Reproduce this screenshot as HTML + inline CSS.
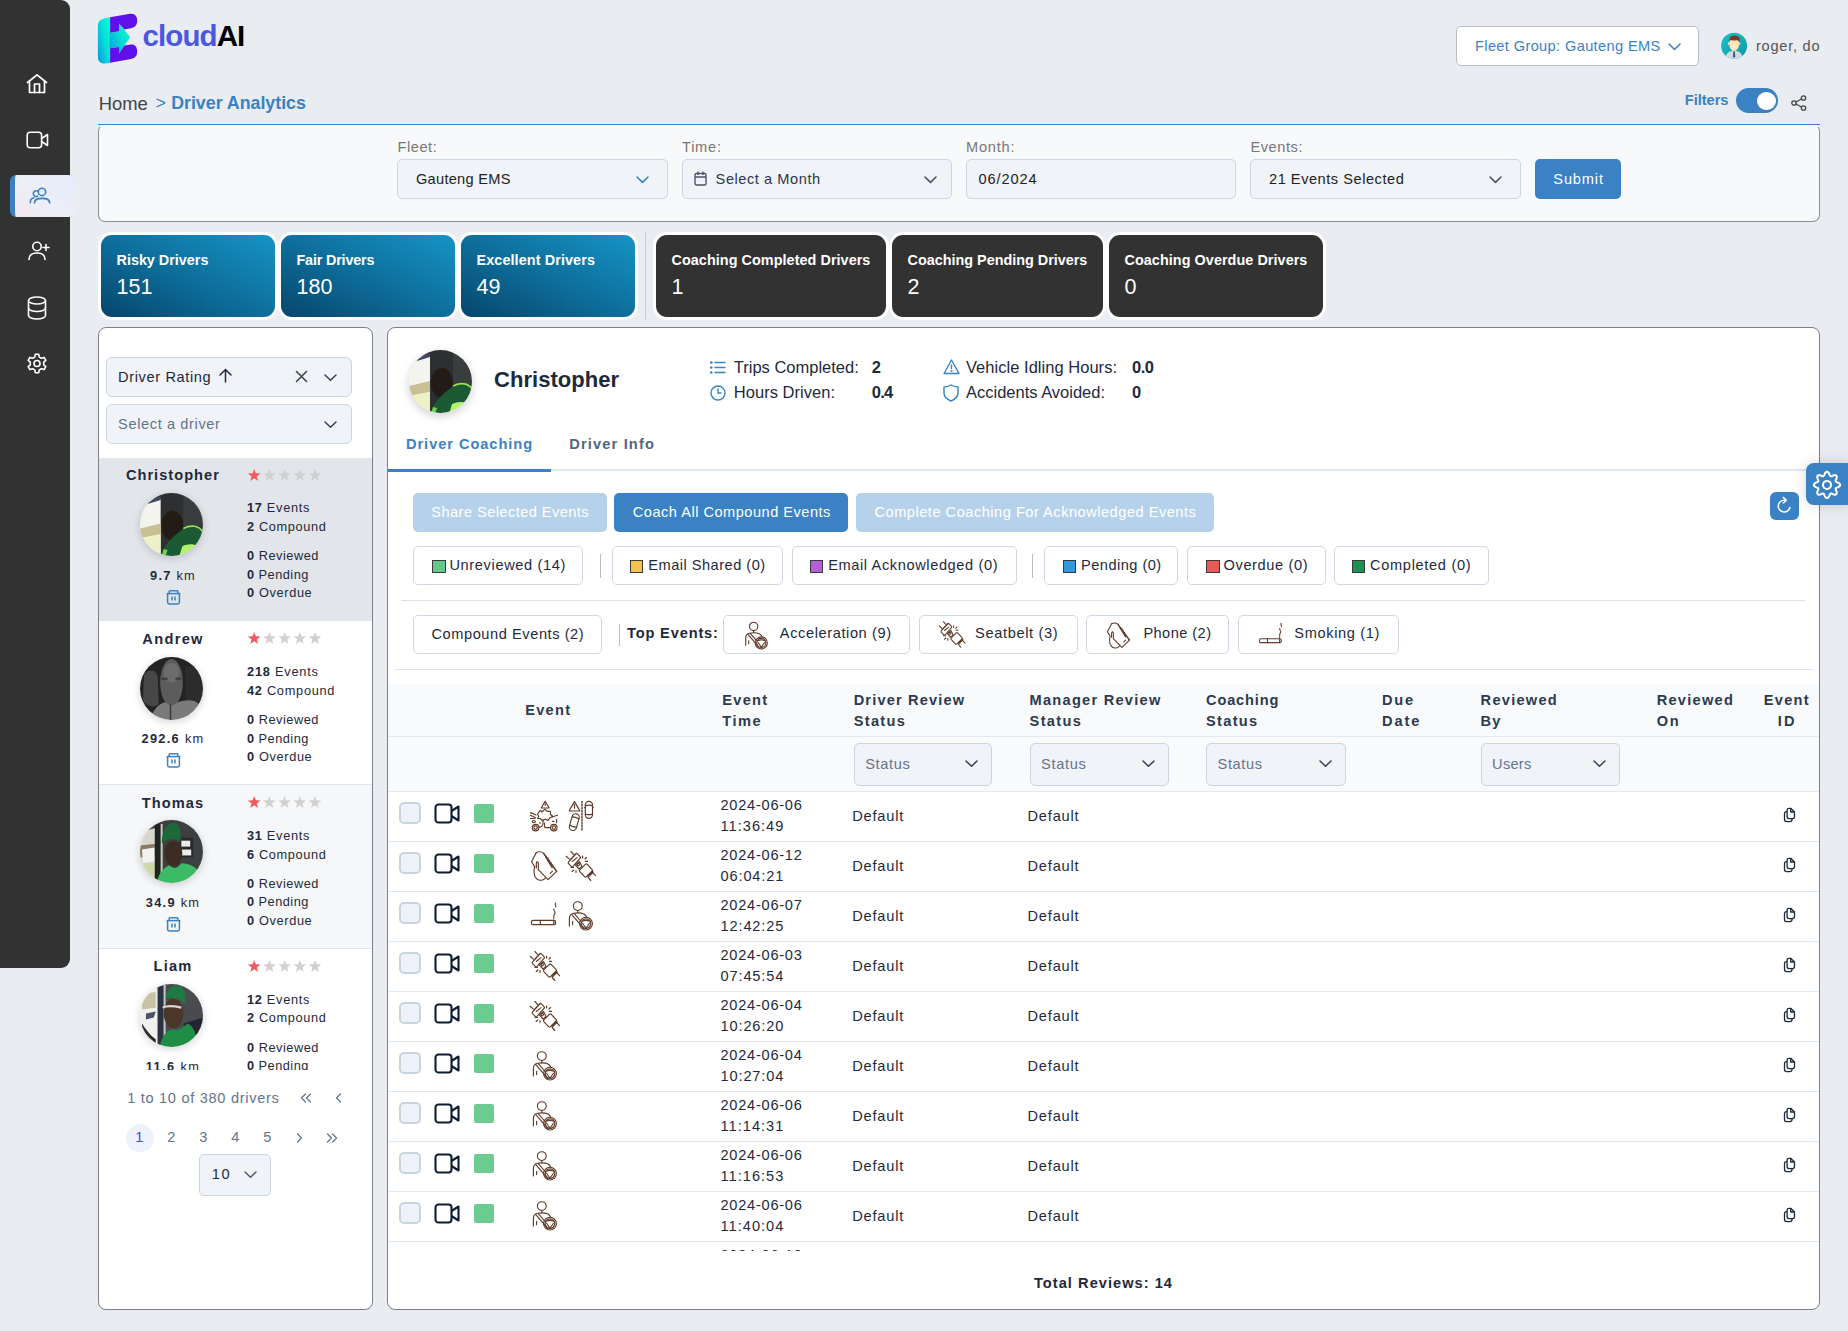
<!DOCTYPE html>
<html><head><meta charset="utf-8"><title>Driver Analytics</title>
<style>
html,body{margin:0;padding:0}
body{width:1848px;height:1331px;overflow:hidden;background:#e9ecf1;position:relative;font-family:"Liberation Sans",sans-serif}
.t{position:absolute;white-space:nowrap;line-height:normal}
.b{position:absolute;box-sizing:border-box}
svg{position:absolute;overflow:visible}
</style></head><body>
<div class="b" style="left:0px;top:0px;width:70px;height:968px;background:#323233;border-radius:0 9px 9px 0;"></div>
<div class="b" style="left:10px;top:175px;width:65px;height:42px;background:linear-gradient(45deg,#f3e9ee 0%,#eceef8 50%,#e4ecfb 100%);border-left:5px solid #3a82c4;border-radius:6px 0 0 6px;"></div>
<svg style="left:26px;top:73px" width="24" height="22" viewBox="0 0 24 22" fill="none" stroke="#ffffff" stroke-width="1.7" stroke-linecap="round" stroke-linejoin="round"><path d="M1.5 9.5 L11 1.8 L20.5 9.5"/><path d="M3.5 8.5 V19.5 H18.5 V8.5"/><path d="M8.5 19.5 V11 H13.5 V19.5"/></svg>
<svg style="left:26px;top:131px" width="24" height="18" viewBox="0 0 24 18" fill="none" stroke="#ffffff" stroke-width="1.6" stroke-linecap="round" stroke-linejoin="round"><rect x="1.2" y="1.2" width="14.4" height="15.6" rx="3"/><path d="M15.6 7.5 L21.5 3.5 V14.5 L15.6 10.5"/></svg>
<svg style="left:0;top:0" width="70" height="260" fill="none" stroke="#3a82c4" stroke-width="1.6" stroke-linecap="round"><circle cx="42" cy="191.9" r="3.7"/><path d="M34.4 203 C34.4 200.2 37.5 198.4 42 198.4 C46.5 198.4 49.7 200.2 49.7 203"/><path d="M37.4 191 A2.9 2.9 0 1 0 37.6 196.2"/><path d="M30.3 202.6 C30.3 200 31.6 198.3 33.9 197.8"/></svg>
<svg style="left:27px;top:240px" width="24" height="22" viewBox="0 0 24 22" fill="none" stroke="#ffffff" stroke-width="1.6" stroke-linecap="round" stroke-linejoin="round"><circle cx="10" cy="6.5" r="4.2"/><path d="M2 19.5 C2 15 5.5 13 10 13 C14.5 13 18 15 18 19.5"/><path d="M19 4.5 V10.5 M16 7.5 H22"/></svg>
<svg style="left:27px;top:296px" width="22" height="24" viewBox="0 0 22 24" fill="none" stroke="#ffffff" stroke-width="1.6" stroke-linecap="round" stroke-linejoin="round"><ellipse cx="10" cy="4.5" rx="8.5" ry="3.5"/><path d="M1.5 4.5 V19.5 C1.5 21.5 5.5 23 10 23 C14.5 23 18.5 21.5 18.5 19.5 V4.5"/><path d="M1.5 12 C1.5 14 5.5 15.5 10 15.5 C14.5 15.5 18.5 14 18.5 12"/></svg>
<svg style="left:25px;top:352px" width="24" height="24" viewBox="0 0 24 24" fill="none" stroke="#ffffff" stroke-width="1.6" stroke-linecap="round" stroke-linejoin="round"><path d="M10.3 2.3 L13.7 2.3 L14.3 5.1 L16.4 6.3 L19.1 5.4 L20.8 8.3 L18.7 10.2 L18.7 12.8 L20.8 14.7 L19.1 17.6 L16.4 16.7 L14.3 17.9 L13.7 20.7 L10.3 20.7 L9.7 17.9 L7.6 16.7 L4.9 17.6 L3.2 14.7 L5.3 12.8 L5.3 10.2 L3.2 8.3 L4.9 5.4 L7.6 6.3 L9.7 5.1 Z"/><circle cx="12" cy="11.5" r="3"/></svg>
<svg style="left:94px;top:10px" width="50" height="58" viewBox="0 0 50 58">
<defs><linearGradient id="lg1" x1="0" y1="1" x2="1" y2="0.2"><stop offset="0" stop-color="#0698dc"/><stop offset="0.6" stop-color="#08e0d8"/><stop offset="1" stop-color="#00ffd2"/></linearGradient></defs>
<path d="M16.1 7.3 L11 8.2 C6.5 9 3.9 11.5 3.9 16 L3.9 47 C3.9 51.5 7 54 11 53.5 L16.1 52.8 Z" fill="url(#lg1)"/>
<path d="M15.6 22.7 L25 21.3 L25 13.5 L36.2 27.2 L25 43.6 L25 37 L15.6 38.3 Z" fill="url(#lg1)"/>
<path d="M16.1 7.3 L36 3.8 C40.5 3 43.2 6 43.2 10.5 C43.2 15 41 17.5 37 18.2 L30.3 19.4 L25 13.5 L25 21.3 L16.1 22.7 Z" fill="#6010ea"/>
<path d="M16.1 38.3 L25 37 L25 43.6 L30.5 35.5 L37 34.5 C41 34 43.2 37 43.2 41.5 C43.2 46 41 48.2 37 48.9 L16.1 52.8 Z" fill="#6010ea"/>
</svg>
<div class="t " style="left:142.60px;top:19.40px;font-size:29.5px;font-weight:700;color:#000;letter-spacing:-0.927px;"><span style="color:#4a57e3">cloud</span><span style="color:#000">AI</span></div>
<div class="b" style="left:1456px;top:26px;width:243px;height:40px;background:#fff;border:1px solid #b9bcc2;border-radius:5px;"></div>
<div class="t " style="left:1475.00px;top:38.39px;font-size:14.6px;font-weight:400;color:#3a82c4;letter-spacing:0.366px;">Fleet Group: Gauteng EMS</div>
<svg style="left:1667.5px;top:43px" width="14" height="8" viewBox="0 0 14 8" fill="none" stroke="#3a82c4" stroke-width="1.6" stroke-linecap="round" stroke-linejoin="round"><path d="M1 1 L6.5 6.5 L12 1"/></svg>
<svg style="left:1716px;top:28px" width="36" height="36" viewBox="0 0 36 36">
<defs><linearGradient id="avg" x1="0" y1="0" x2="1" y2="1"><stop offset="0" stop-color="#1bc0cc"/><stop offset="1" stop-color="#0e9aa4"/></linearGradient><clipPath id="avc"><circle cx="18.1" cy="17.8" r="13"/></clipPath></defs>
<circle cx="18.1" cy="17.8" r="13" fill="url(#avg)"/>
<g clip-path="url(#avc)">
<path d="M9.5 31 C10 25 13 23 18 22.6 C23 23 26 25 27 31 Z" fill="#d3dae2"/>
<path d="M16.6 22.4 L19.6 22.4 L18.1 24 Z" fill="#ffffff"/>
<path d="M17.4 23.2 L18.8 23.2 L19.2 28.5 L18.1 30 L17 28.5 Z" fill="#2b5b82"/>
</g>
<rect x="16.4" y="19" width="3.4" height="4" fill="#f8d8a0"/>
<ellipse cx="12.9" cy="15.6" rx="1" ry="1.3" fill="#fde0b0"/><ellipse cx="23.4" cy="15.6" rx="1" ry="1.3" fill="#fde0b0"/>
<path d="M13.4 12.5 C13.4 9.8 15.5 8.8 18.1 8.8 C20.8 8.8 22.9 9.8 22.9 12.5 L22.9 17 C22.9 20.5 20.6 22.6 18.1 22.6 C15.6 22.6 13.4 20.5 13.4 17 Z" fill="#fee6b8"/>
<path d="M13 14.6 C12.6 10 14.5 7.4 18 7.4 C21.5 7.4 23.6 9 23.8 10.8 C23.8 12 23.4 13.6 23.2 14.6 C22.8 12.6 22 12 20.5 12.2 C18 12.6 15.5 12.2 13.8 12.2 C13.4 12.8 13.2 13.8 13 14.6 Z" fill="#6e3f25"/>
<ellipse cx="18" cy="18.8" rx="1.3" ry="0.7" fill="#ffffff"/>
</svg>
<div class="t " style="left:1756.00px;top:38.39px;font-size:14.6px;font-weight:400;color:#555555;letter-spacing:0.749px;">roger, do</div>
<div class="t " style="left:98.80px;top:93.05px;font-size:18.4px;font-weight:400;color:#444444;letter-spacing:-0.027px;">Home</div>
<div class="t " style="left:155.50px;top:92.69px;font-size:17.8px;font-weight:400;color:#3a82c4;letter-spacing:0.000px;">&gt;</div>
<div class="t " style="left:171.20px;top:92.69px;font-size:17.8px;font-weight:700;color:#3a82c4;letter-spacing:-0.006px;">Driver Analytics</div>
<div class="t " style="left:1684.80px;top:92.20px;font-size:14.7px;font-weight:700;color:#3a82c4;letter-spacing:-0.069px;">Filters</div>
<div class="b" style="left:1736px;top:88px;width:42px;height:25px;background:#3a82c4;border-radius:13px;"></div>
<div class="b" style="left:1757px;top:91.5px;width:18.5px;height:18.5px;background:#fff;border-radius:50%;"></div>
<svg style="left:1791px;top:95px" width="16" height="16" viewBox="0 0 16 16" fill="none" stroke="#444" stroke-width="1.3" stroke-linecap="round" stroke-linejoin="round"><circle cx="12.5" cy="3" r="2.2"/><circle cx="3" cy="8" r="2.2"/><circle cx="12.5" cy="13" r="2.2"/><path d="M5 7 L10.5 4 M5 9 L10.5 12"/></svg>
<div class="b" style="left:98px;top:124.5px;width:1722px;height:97.5px;background:#f8f9fb;border:1px solid #8a8d93;border-top-color:#ffffff;border-radius:6px 6px 7px 7px;"></div>
<div class="b" style="left:98px;top:123.6px;width:1722px;height:1.5px;background:#3a82c4;"></div>
<div class="t " style="left:397.40px;top:139.29px;font-size:14.6px;font-weight:400;color:#777777;letter-spacing:0.572px;">Fleet:</div>
<div class="b" style="left:397px;top:159px;width:271px;height:40px;background:#f0f3f8;border:1px solid #cdd5e0;border-radius:5px;"></div>
<div class="t " style="left:416.00px;top:170.99px;font-size:14.6px;font-weight:400;color:#222;letter-spacing:0.272px;">Gauteng EMS</div>
<svg style="left:636px;top:176px" width="13" height="7" viewBox="0 0 13 7" fill="none" stroke="#3a82c4" stroke-width="1.6" stroke-linecap="round" stroke-linejoin="round"><path d="M1 1 L6.5 6.3 L12 1"/></svg>
<div class="t " style="left:682.00px;top:139.29px;font-size:14.6px;font-weight:400;color:#777777;letter-spacing:0.755px;">Time:</div>
<div class="b" style="left:682px;top:159px;width:270px;height:40px;background:#f0f3f8;border:1px solid #cdd5e0;border-radius:5px;"></div>
<div class="t " style="left:715.60px;top:170.99px;font-size:14.6px;font-weight:400;color:#2d3748;letter-spacing:0.551px;">Select a Month</div>
<svg style="left:923.5px;top:176px" width="13" height="7" viewBox="0 0 13 7" fill="none" stroke="#4a5568" stroke-width="1.6" stroke-linecap="round" stroke-linejoin="round"><path d="M1 1 L6.5 6.3 L12 1"/></svg>
<svg style="left:694px;top:171px" width="13" height="15" viewBox="0 0 13 15" fill="none" stroke="#4a5568" stroke-width="1.4"><rect x="1" y="2.5" width="11" height="11.5" rx="1.5"/><path d="M1 6 H12 M4 0.5 V4 M9 0.5 V4"/></svg>
<div class="t " style="left:966.00px;top:139.29px;font-size:14.6px;font-weight:400;color:#777777;letter-spacing:0.792px;">Month:</div>
<div class="b" style="left:966px;top:159px;width:270px;height:40px;background:#f0f3f8;border:1px solid #cdd5e0;border-radius:5px;"></div>
<div class="t " style="left:978.50px;top:171.19px;font-size:14.6px;font-weight:400;color:#222;letter-spacing:0.897px;">06/2024</div>
<div class="t " style="left:1250.40px;top:139.29px;font-size:14.6px;font-weight:400;color:#777777;letter-spacing:0.571px;">Events:</div>
<div class="b" style="left:1250px;top:159px;width:271px;height:40px;background:#f0f3f8;border:1px solid #cdd5e0;border-radius:5px;"></div>
<div class="t " style="left:1269.00px;top:170.99px;font-size:14.6px;font-weight:400;color:#222;letter-spacing:0.529px;">21 Events Selected</div>
<svg style="left:1489px;top:176px" width="13" height="7" viewBox="0 0 13 7" fill="none" stroke="#4a5568" stroke-width="1.6" stroke-linecap="round" stroke-linejoin="round"><path d="M1 1 L6.5 6.3 L12 1"/></svg>
<div class="b" style="left:1535px;top:159px;width:86px;height:40px;background:#3a82c4;border-radius:5px;"></div>
<div class="t " style="left:1553.30px;top:171.19px;font-size:14.6px;font-weight:400;color:#fff;letter-spacing:0.845px;">Submit</div>
<div class="b" style="left:98px;top:232px;width:180px;height:88px;background:linear-gradient(205deg,#1594c6 0%,#0e6f9c 50%,#06466c 100%);border:3px solid #fff;border-radius:14px;"></div>
<div class="t " style="left:116.50px;top:251.97px;font-size:14.4px;font-weight:700;color:#fff;letter-spacing:-0.006px;">Risky Drivers</div>
<div class="t " style="left:116.50px;top:275.24px;font-size:21.5px;font-weight:400;color:#fff;letter-spacing:0.000px;">151</div>
<div class="b" style="left:278px;top:232px;width:180px;height:88px;background:linear-gradient(205deg,#1594c6 0%,#0e6f9c 50%,#06466c 100%);border:3px solid #fff;border-radius:14px;"></div>
<div class="t " style="left:296.50px;top:251.97px;font-size:14.4px;font-weight:700;color:#fff;letter-spacing:-0.187px;">Fair Drivers</div>
<div class="t " style="left:296.50px;top:275.24px;font-size:21.5px;font-weight:400;color:#fff;letter-spacing:0.000px;">180</div>
<div class="b" style="left:458px;top:232px;width:180px;height:88px;background:linear-gradient(205deg,#1594c6 0%,#0e6f9c 50%,#06466c 100%);border:3px solid #fff;border-radius:14px;"></div>
<div class="t " style="left:476.50px;top:251.97px;font-size:14.4px;font-weight:700;color:#fff;letter-spacing:0.101px;">Excellent Drivers</div>
<div class="t " style="left:476.50px;top:275.24px;font-size:21.5px;font-weight:400;color:#fff;letter-spacing:0.000px;">49</div>
<div class="b" style="left:645px;top:232px;width:1px;height:88px;background:#c9ccd2;"></div>
<div class="b" style="left:653px;top:232px;width:236px;height:88px;background:#323233;border:3px solid #fff;border-radius:14px;"></div>
<div class="t " style="left:671.50px;top:251.97px;font-size:14.4px;font-weight:700;color:#fff;letter-spacing:0.054px;">Coaching Completed Drivers</div>
<div class="t " style="left:671.50px;top:275.24px;font-size:21.5px;font-weight:400;color:#fff;letter-spacing:0.000px;">1</div>
<div class="b" style="left:889px;top:232px;width:217px;height:88px;background:#323233;border:3px solid #fff;border-radius:14px;"></div>
<div class="t " style="left:907.50px;top:251.97px;font-size:14.4px;font-weight:700;color:#fff;letter-spacing:-0.002px;">Coaching Pending Drivers</div>
<div class="t " style="left:907.50px;top:275.24px;font-size:21.5px;font-weight:400;color:#fff;letter-spacing:0.000px;">2</div>
<div class="b" style="left:1106px;top:232px;width:220px;height:88px;background:#323233;border:3px solid #fff;border-radius:14px;"></div>
<div class="t " style="left:1124.50px;top:251.97px;font-size:14.4px;font-weight:700;color:#fff;letter-spacing:0.057px;">Coaching Overdue Drivers</div>
<div class="t " style="left:1124.50px;top:275.24px;font-size:21.5px;font-weight:400;color:#fff;letter-spacing:0.000px;">0</div>
<div class="b" style="left:98px;top:327px;width:275px;height:983px;background:#fff;border:1px solid #7d7f86;border-radius:8px;"></div>
<div class="b" style="left:106px;top:357px;width:246px;height:40px;background:#f0f3f8;border:1px solid #cbd5e1;border-radius:6px;"></div>
<div class="t " style="left:118.10px;top:368.79px;font-size:14.6px;font-weight:400;color:#1e293b;letter-spacing:0.623px;">Driver Rating</div>
<svg style="left:323.5px;top:374px" width="13" height="7" viewBox="0 0 13 7" fill="none" stroke="#334155" stroke-width="1.5" stroke-linecap="round" stroke-linejoin="round"><path d="M1 1 L6.5 6.3 L12 1"/></svg>
<svg style="left:219px;top:368px" width="13" height="15" viewBox="0 0 13 15" fill="none" stroke="#1e293b" stroke-width="1.5" stroke-linecap="round"><path d="M6.5 14 V1.5 M1 7 L6.5 1.5 L12 7"/></svg><svg style="left:295px;top:370px" width="13" height="13" viewBox="0 0 13 13" fill="none" stroke="#334155" stroke-width="1.5" stroke-linecap="round"><path d="M1.5 1.5 L11.5 11.5 M11.5 1.5 L1.5 11.5"/></svg>
<div class="b" style="left:106px;top:404px;width:246px;height:40px;background:#f0f3f8;border:1px solid #cbd5e1;border-radius:6px;"></div>
<div class="t " style="left:118.10px;top:415.79px;font-size:14.6px;font-weight:400;color:#64748b;letter-spacing:0.610px;">Select a driver</div>
<svg style="left:323.5px;top:421px" width="13" height="7" viewBox="0 0 13 7" fill="none" stroke="#334155" stroke-width="1.5" stroke-linecap="round" stroke-linejoin="round"><path d="M1 1 L6.5 6.3 L12 1"/></svg>
<div class="b" style="left:99px;top:458px;width:273px;height:612px;overflow:hidden">
<div class="b" style="left:0;top:-0.30px;width:273px;height:163.7px;background:#e2e6ea;border-bottom:1px solid #dfe5ec"></div>
<div class="t " style="left:26.91px;top:9.19px;font-size:14.6px;font-weight:700;color:#1e293b;letter-spacing:1.024px;">Christopher</div>
<svg style="left:0;top:-0.30px" width="273" height="40"><polygon points="155.20,11.00 156.83,15.36 161.48,15.56 157.84,18.46 159.08,22.94 155.20,20.37 151.32,22.94 152.56,18.46 148.92,15.56 153.57,15.36" fill="#ef5b5f"/><polygon points="170.40,11.00 172.03,15.36 176.68,15.56 173.04,18.46 174.28,22.94 170.40,20.37 166.52,22.94 167.76,18.46 164.12,15.56 168.77,15.36" fill="#d0d0d0"/><polygon points="185.60,11.00 187.23,15.36 191.88,15.56 188.24,18.46 189.48,22.94 185.60,20.37 181.72,22.94 182.96,18.46 179.32,15.56 183.97,15.36" fill="#d0d0d0"/><polygon points="200.80,11.00 202.43,15.36 207.08,15.56 203.44,18.46 204.68,22.94 200.80,20.37 196.92,22.94 198.16,18.46 194.52,15.56 199.17,15.36" fill="#d0d0d0"/><polygon points="216.00,11.00 217.63,15.36 222.28,15.56 218.64,18.46 219.88,22.94 216.00,20.37 212.12,22.94 213.36,18.46 209.72,15.56 214.37,15.36" fill="#d0d0d0"/></svg>
<div class="b" style="left:41.3px;top:35.00px;width:63px;height:63px;border-radius:50%;overflow:hidden;box-shadow:0 2px 8px rgba(0,0,0,0.18)"><svg style="left:0;top:0;filter:blur(0.5px)" width="63" height="63" viewBox="0 0 64 64"><defs></defs><rect width="64" height="64" fill="#2e2f30"/><rect x="44" y="0" width="20" height="34" fill="#3a3d3e"/><path d="M0 12 L21 6 L21 64 L0 64 Z" fill="#f4f4ee"/><path d="M0 36 L21 31 L21 42 L0 46 Z" fill="#c9bf95"/><path d="M0 46 L21 42 L21 64 L0 64 Z" fill="#eef0c8"/><path d="M0 10 L21 3.5 L21 7 L0 13.5 Z" fill="#3f4a6a"/><ellipse cx="33" cy="33" rx="11" ry="15" fill="#231b16"/><path d="M21 64 C24 52 34 44 44 36 C52 32 60 33 64 38 L64 64 Z" fill="#1c5a34"/><path d="M44 36 C52 32 60 33 64 40" stroke="#9be04a" stroke-width="1.6" fill="none"/><path d="M40 64 L43 54 C48 52 54 51 58 54 L56 64 Z" fill="#b2f26a"/><path d="M22 64 L24 57 L28 58 L26 64 Z" fill="#6fd24a"/></svg></div>
<div class="t " style="left:148.00px;top:42.44px;font-size:12.775px;font-weight:400;color:#1e293b;letter-spacing:0.700px;"><b style="font-weight:700">17</b> Events</div>
<div class="t " style="left:148.00px;top:61.14px;font-size:12.775px;font-weight:400;color:#1e293b;letter-spacing:0.647px;"><b style="font-weight:700">2</b> Compound</div>
<div class="t " style="left:148.00px;top:90.44px;font-size:12.775px;font-weight:400;color:#1e293b;letter-spacing:0.521px;"><b style="font-weight:700">0</b> Reviewed</div>
<div class="t " style="left:148.00px;top:108.84px;font-size:12.775px;font-weight:400;color:#1e293b;letter-spacing:0.481px;"><b style="font-weight:700">0</b> Pending</div>
<div class="t " style="left:148.00px;top:127.24px;font-size:12.775px;font-weight:400;color:#1e293b;letter-spacing:0.636px;"><b style="font-weight:700">0</b> Overdue</div>
<div class="t " style="left:51.09px;top:109.64px;font-size:12.775px;font-weight:400;color:#1e293b;letter-spacing:1.256px;"><b style="font-weight:700">9.7</b> km</div>
<svg style="left:66.5px;top:131.50px" width="15" height="15" viewBox="0 0 15 15" fill="none" stroke="#3a82c4" stroke-width="1.5" stroke-linejoin="round"><path d="M3.2 3.5 V1.5 Q3.2 0.8 4 0.8 H11 Q11.8 0.8 11.8 1.5 V3.5"/><path d="M0.6 3.6 H14.4"/><path d="M1.6 3.6 V12.3 Q1.6 14 3.3 14 H11.7 Q13.4 14 13.4 12.3 V3.6"/><path d="M6 6.5 V10.5 M9 6.5 V10.5"/></svg>
<div class="b" style="left:0;top:163.40px;width:273px;height:163.7px;background:#ffffff;border-bottom:1px solid #dfe5ec"></div>
<div class="t " style="left:43.32px;top:172.89px;font-size:14.6px;font-weight:700;color:#1e293b;letter-spacing:1.324px;">Andrew</div>
<svg style="left:0;top:163.40px" width="273" height="40"><polygon points="155.20,11.00 156.83,15.36 161.48,15.56 157.84,18.46 159.08,22.94 155.20,20.37 151.32,22.94 152.56,18.46 148.92,15.56 153.57,15.36" fill="#ef5b5f"/><polygon points="170.40,11.00 172.03,15.36 176.68,15.56 173.04,18.46 174.28,22.94 170.40,20.37 166.52,22.94 167.76,18.46 164.12,15.56 168.77,15.36" fill="#d0d0d0"/><polygon points="185.60,11.00 187.23,15.36 191.88,15.56 188.24,18.46 189.48,22.94 185.60,20.37 181.72,22.94 182.96,18.46 179.32,15.56 183.97,15.36" fill="#d0d0d0"/><polygon points="200.80,11.00 202.43,15.36 207.08,15.56 203.44,18.46 204.68,22.94 200.80,20.37 196.92,22.94 198.16,18.46 194.52,15.56 199.17,15.36" fill="#d0d0d0"/><polygon points="216.00,11.00 217.63,15.36 222.28,15.56 218.64,18.46 219.88,22.94 216.00,20.37 212.12,22.94 213.36,18.46 209.72,15.56 214.37,15.36" fill="#d0d0d0"/></svg>
<div class="b" style="left:41.3px;top:198.70px;width:63px;height:63px;border-radius:50%;overflow:hidden;box-shadow:0 2px 8px rgba(0,0,0,0.18)"><svg style="left:0;top:0;filter:blur(0.5px)" width="63" height="63" viewBox="0 0 64 64"><defs></defs><rect width="64" height="64" fill="#232323"/><path d="M4 18 C8 12 16 12 18 20 L19 48 C14 52 6 50 3 44 Z" fill="#474747"/><rect x="46" y="10" width="18" height="36" fill="#2c2c2c"/><ellipse cx="32" cy="26" rx="11.5" ry="24" fill="#5c5c5c"/><ellipse cx="32" cy="16" rx="8" ry="10" fill="#6c6c6c"/><path d="M22 22 H28 M36 22 H42" stroke="#3a3a3a" stroke-width="2"/><path d="M10 64 C14 52 20 47 26 46 C30 50 34 50 38 46 C46 44 54 42 60 48 L64 64 Z" fill="#7a7a7a"/><path d="M31 48 V64" stroke="#3a3a3a" stroke-width="1.5"/></svg></div>
<div class="t " style="left:148.00px;top:206.14px;font-size:12.775px;font-weight:400;color:#1e293b;letter-spacing:0.780px;"><b style="font-weight:700">218</b> Events</div>
<div class="t " style="left:148.00px;top:224.84px;font-size:12.775px;font-weight:400;color:#1e293b;letter-spacing:0.724px;"><b style="font-weight:700">42</b> Compound</div>
<div class="t " style="left:148.00px;top:254.14px;font-size:12.775px;font-weight:400;color:#1e293b;letter-spacing:0.521px;"><b style="font-weight:700">0</b> Reviewed</div>
<div class="t " style="left:148.00px;top:272.54px;font-size:12.775px;font-weight:400;color:#1e293b;letter-spacing:0.481px;"><b style="font-weight:700">0</b> Pending</div>
<div class="t " style="left:148.00px;top:290.94px;font-size:12.775px;font-weight:400;color:#1e293b;letter-spacing:0.636px;"><b style="font-weight:700">0</b> Overdue</div>
<div class="t " style="left:42.57px;top:273.34px;font-size:12.775px;font-weight:400;color:#1e293b;letter-spacing:1.303px;"><b style="font-weight:700">292.6</b> km</div>
<svg style="left:66.5px;top:295.20px" width="15" height="15" viewBox="0 0 15 15" fill="none" stroke="#3a82c4" stroke-width="1.5" stroke-linejoin="round"><path d="M3.2 3.5 V1.5 Q3.2 0.8 4 0.8 H11 Q11.8 0.8 11.8 1.5 V3.5"/><path d="M0.6 3.6 H14.4"/><path d="M1.6 3.6 V12.3 Q1.6 14 3.3 14 H11.7 Q13.4 14 13.4 12.3 V3.6"/><path d="M6 6.5 V10.5 M9 6.5 V10.5"/></svg>
<div class="b" style="left:0;top:327.10px;width:273px;height:163.7px;background:#f6f7f8;border-bottom:1px solid #dfe5ec"></div>
<div class="t " style="left:42.65px;top:336.59px;font-size:14.6px;font-weight:700;color:#1e293b;letter-spacing:1.105px;">Thomas</div>
<svg style="left:0;top:327.10px" width="273" height="40"><polygon points="155.20,11.00 156.83,15.36 161.48,15.56 157.84,18.46 159.08,22.94 155.20,20.37 151.32,22.94 152.56,18.46 148.92,15.56 153.57,15.36" fill="#ef5b5f"/><polygon points="170.40,11.00 172.03,15.36 176.68,15.56 173.04,18.46 174.28,22.94 170.40,20.37 166.52,22.94 167.76,18.46 164.12,15.56 168.77,15.36" fill="#d0d0d0"/><polygon points="185.60,11.00 187.23,15.36 191.88,15.56 188.24,18.46 189.48,22.94 185.60,20.37 181.72,22.94 182.96,18.46 179.32,15.56 183.97,15.36" fill="#d0d0d0"/><polygon points="200.80,11.00 202.43,15.36 207.08,15.56 203.44,18.46 204.68,22.94 200.80,20.37 196.92,22.94 198.16,18.46 194.52,15.56 199.17,15.36" fill="#d0d0d0"/><polygon points="216.00,11.00 217.63,15.36 222.28,15.56 218.64,18.46 219.88,22.94 216.00,20.37 212.12,22.94 213.36,18.46 209.72,15.56 214.37,15.36" fill="#d0d0d0"/></svg>
<div class="b" style="left:41.3px;top:362.40px;width:63px;height:63px;border-radius:50%;overflow:hidden;box-shadow:0 2px 8px rgba(0,0,0,0.18)"><svg style="left:0;top:0;filter:blur(0.5px)" width="63" height="63" viewBox="0 0 64 64"><defs></defs><rect width="64" height="64" fill="#3e3f40"/><path d="M0 12 L16 8 L16 64 L0 64 Z" fill="#d9d6cc"/><path d="M0 26 L16 24 L16 36 L0 38 Z" fill="#8a7a62"/><path d="M2 30 L15 28 L15 42 L3 44 Z" fill="#f2f2f2"/><path d="M0 44 L16 44 L16 64 L0 64 Z" fill="#cfd8a8"/><rect x="15" y="4" width="6" height="60" fill="#1f2420"/><rect x="21" y="4" width="2" height="60" fill="#c8cfc0"/><rect x="40" y="18" width="14" height="20" fill="#2a2a2a"/><rect x="42" y="21" width="9" height="6" fill="#ececec"/><rect x="42" y="30" width="10" height="6" fill="#ececec"/><ellipse cx="34" cy="34" rx="9" ry="13" fill="#3d2c22"/><path d="M22 24 C22 10 28 3 34 3 C40 3 42 10 41 22 C36 18 28 18 22 24 Z" fill="#1c6a3a"/><path d="M17 64 C19 54 24 48 30 46 C34 50 38 50 42 44 C52 44 60 50 62 56 L64 64 Z" fill="#3cba64"/></svg></div>
<div class="t " style="left:148.00px;top:369.84px;font-size:12.775px;font-weight:400;color:#1e293b;letter-spacing:0.700px;"><b style="font-weight:700">31</b> Events</div>
<div class="t " style="left:148.00px;top:388.54px;font-size:12.775px;font-weight:400;color:#1e293b;letter-spacing:0.647px;"><b style="font-weight:700">6</b> Compound</div>
<div class="t " style="left:148.00px;top:417.84px;font-size:12.775px;font-weight:400;color:#1e293b;letter-spacing:0.521px;"><b style="font-weight:700">0</b> Reviewed</div>
<div class="t " style="left:148.00px;top:436.24px;font-size:12.775px;font-weight:400;color:#1e293b;letter-spacing:0.481px;"><b style="font-weight:700">0</b> Pending</div>
<div class="t " style="left:148.00px;top:454.64px;font-size:12.775px;font-weight:400;color:#1e293b;letter-spacing:0.636px;"><b style="font-weight:700">0</b> Overdue</div>
<div class="t " style="left:46.83px;top:437.04px;font-size:12.775px;font-weight:400;color:#1e293b;letter-spacing:1.283px;"><b style="font-weight:700">34.9</b> km</div>
<svg style="left:66.5px;top:458.90px" width="15" height="15" viewBox="0 0 15 15" fill="none" stroke="#3a82c4" stroke-width="1.5" stroke-linejoin="round"><path d="M3.2 3.5 V1.5 Q3.2 0.8 4 0.8 H11 Q11.8 0.8 11.8 1.5 V3.5"/><path d="M0.6 3.6 H14.4"/><path d="M1.6 3.6 V12.3 Q1.6 14 3.3 14 H11.7 Q13.4 14 13.4 12.3 V3.6"/><path d="M6 6.5 V10.5 M9 6.5 V10.5"/></svg>
<div class="b" style="left:0;top:490.80px;width:273px;height:163.7px;background:#ffffff;border-bottom:1px solid #dfe5ec"></div>
<div class="t " style="left:54.52px;top:500.29px;font-size:14.6px;font-weight:700;color:#1e293b;letter-spacing:1.227px;">Liam</div>
<svg style="left:0;top:490.80px" width="273" height="40"><polygon points="155.20,11.00 156.83,15.36 161.48,15.56 157.84,18.46 159.08,22.94 155.20,20.37 151.32,22.94 152.56,18.46 148.92,15.56 153.57,15.36" fill="#ef5b5f"/><polygon points="170.40,11.00 172.03,15.36 176.68,15.56 173.04,18.46 174.28,22.94 170.40,20.37 166.52,22.94 167.76,18.46 164.12,15.56 168.77,15.36" fill="#d0d0d0"/><polygon points="185.60,11.00 187.23,15.36 191.88,15.56 188.24,18.46 189.48,22.94 185.60,20.37 181.72,22.94 182.96,18.46 179.32,15.56 183.97,15.36" fill="#d0d0d0"/><polygon points="200.80,11.00 202.43,15.36 207.08,15.56 203.44,18.46 204.68,22.94 200.80,20.37 196.92,22.94 198.16,18.46 194.52,15.56 199.17,15.36" fill="#d0d0d0"/><polygon points="216.00,11.00 217.63,15.36 222.28,15.56 218.64,18.46 219.88,22.94 216.00,20.37 212.12,22.94 213.36,18.46 209.72,15.56 214.37,15.36" fill="#d0d0d0"/></svg>
<div class="b" style="left:41.3px;top:526.10px;width:63px;height:63px;border-radius:50%;overflow:hidden;box-shadow:0 2px 8px rgba(0,0,0,0.18)"><svg style="left:0;top:0;filter:blur(0.5px)" width="63" height="63" viewBox="0 0 64 64"><defs></defs><rect width="64" height="64" fill="#4a4b4e"/><path d="M0 6 L18 4 L18 64 L0 64 Z" fill="#f1f0ec"/><path d="M2 10 L16 8 L16 24 L2 26 Z" fill="#c9c2a8"/><path d="M6 30 L16 28 L14 34 L6 36 Z" fill="#4a5468"/><path d="M2 40 C6 46 10 52 16 56 L16 64 L8 64 C4 56 2 48 2 40 Z" fill="#2a2a2a"/><rect x="18" y="1" width="6" height="63" fill="#2b3240"/><rect x="24" y="1" width="2" height="63" fill="#c8c8d0"/><path d="M44 40 L64 34 L64 64 L50 64 Z" fill="#232530"/><ellipse cx="34" cy="30" rx="10" ry="15" fill="#4b372a"/><path d="M26 14 C27 4 34 1 40 2 C46 4 47 12 46 20 C40 15 32 14 26 14 Z" fill="#1f7a42"/><path d="M23 24 C27 22 33 22 42 24" stroke="#d8d8d0" stroke-width="2.2" fill="none"/><path d="M20 64 C22 54 26 48 32 46 C38 48 44 44 48 40 C54 42 58 50 58 64 Z" fill="#1f8d46"/></svg></div>
<div class="t " style="left:148.00px;top:533.54px;font-size:12.775px;font-weight:400;color:#1e293b;letter-spacing:0.700px;"><b style="font-weight:700">12</b> Events</div>
<div class="t " style="left:148.00px;top:552.24px;font-size:12.775px;font-weight:400;color:#1e293b;letter-spacing:0.647px;"><b style="font-weight:700">2</b> Compound</div>
<div class="t " style="left:148.00px;top:581.54px;font-size:12.775px;font-weight:400;color:#1e293b;letter-spacing:0.521px;"><b style="font-weight:700">0</b> Reviewed</div>
<div class="t " style="left:148.00px;top:599.94px;font-size:12.775px;font-weight:400;color:#1e293b;letter-spacing:0.481px;"><b style="font-weight:700">0</b> Pending</div>
<div class="t " style="left:148.00px;top:618.34px;font-size:12.775px;font-weight:400;color:#1e293b;letter-spacing:0.636px;"><b style="font-weight:700">0</b> Overdue</div>
<div class="t " style="left:46.83px;top:600.74px;font-size:12.775px;font-weight:400;color:#1e293b;letter-spacing:1.401px;"><b style="font-weight:700">11.6</b> km</div>
<svg style="left:66.5px;top:622.60px" width="15" height="15" viewBox="0 0 15 15" fill="none" stroke="#3a82c4" stroke-width="1.5" stroke-linejoin="round"><path d="M3.2 3.5 V1.5 Q3.2 0.8 4 0.8 H11 Q11.8 0.8 11.8 1.5 V3.5"/><path d="M0.6 3.6 H14.4"/><path d="M1.6 3.6 V12.3 Q1.6 14 3.3 14 H11.7 Q13.4 14 13.4 12.3 V3.6"/><path d="M6 6.5 V10.5 M9 6.5 V10.5"/></svg>
</div>
<div class="t " style="left:127.20px;top:1090.49px;font-size:14.6px;font-weight:400;color:#64748b;letter-spacing:0.693px;">1 to 10 of 380 drivers</div>
<svg style="left:300px;top:1093px" width="12" height="10" viewBox="0 0 12 10" fill="none" stroke="#64748b" stroke-width="1.3" stroke-linecap="round" stroke-linejoin="round"><path d="M5.5 1 L1.5 5 L5.5 9 M10.5 1 L6.5 5 L10.5 9"/></svg>
<svg style="left:334.5px;top:1093px" width="7" height="10" viewBox="0 0 7 10" fill="none" stroke="#64748b" stroke-width="1.3" stroke-linecap="round" stroke-linejoin="round"><path d="M5.5 1 L1.5 5 L5.5 9"/></svg>
<div class="b" style="left:125.8px;top:1124px;width:28px;height:28px;background:#eef2fd;border-radius:50%;"></div>
<div class="t " style="left:135.25px;top:1129.19px;font-size:14.6px;font-weight:400;color:#4f46e5;letter-spacing:0.000px;">1</div>
<div class="t " style="left:167.25px;top:1129.19px;font-size:14.6px;font-weight:400;color:#64748b;letter-spacing:0.000px;">2</div>
<div class="t " style="left:199.25px;top:1129.19px;font-size:14.6px;font-weight:400;color:#64748b;letter-spacing:0.000px;">3</div>
<div class="t " style="left:231.25px;top:1129.19px;font-size:14.6px;font-weight:400;color:#64748b;letter-spacing:0.000px;">4</div>
<div class="t " style="left:263.25px;top:1129.19px;font-size:14.6px;font-weight:400;color:#64748b;letter-spacing:0.000px;">5</div>
<svg style="left:295.5px;top:1133px" width="7" height="10" viewBox="0 0 7 10" fill="none" stroke="#64748b" stroke-width="1.3" stroke-linecap="round" stroke-linejoin="round"><path d="M1.5 1 L5.5 5 L1.5 9"/></svg>
<svg style="left:326px;top:1133px" width="12" height="10" viewBox="0 0 12 10" fill="none" stroke="#64748b" stroke-width="1.3" stroke-linecap="round" stroke-linejoin="round"><path d="M1.5 1 L5.5 5 L1.5 9 M6.5 1 L10.5 5 L6.5 9"/></svg>
<div class="b" style="left:199.4px;top:1154px;width:72px;height:41.5px;background:#f0f3f8;border:1px solid #cbd5e1;border-radius:5px;"></div>
<div class="t " style="left:211.70px;top:1166.29px;font-size:14.6px;font-weight:400;color:#1e293b;letter-spacing:1.573px;">10</div>
<svg style="left:244px;top:1171px" width="13" height="7" viewBox="0 0 13 7" fill="none" stroke="#475569" stroke-width="1.4" stroke-linecap="round" stroke-linejoin="round"><path d="M1 1 L6.5 6.3 L12 1"/></svg>
<div class="b" style="left:387px;top:327px;width:1433px;height:983px;background:#fff;border:1px solid #7d7f86;border-radius:8px;"></div>
<div class="b" style="left:408.5px;top:349.7px;width:63.5px;height:63.5px;border-radius:50%;overflow:hidden;box-shadow:0 3px 10px rgba(0,0,0,0.2)"><svg style="left:0;top:0;filter:blur(0.5px)" width="64" height="64" viewBox="0 0 64 64"><rect width="64" height="64" fill="#2e2f30"/><rect x="44" y="0" width="20" height="34" fill="#3a3d3e"/><path d="M0 12 L21 6 L21 64 L0 64 Z" fill="#f4f4ee"/><path d="M0 36 L21 31 L21 42 L0 46 Z" fill="#c9bf95"/><path d="M0 46 L21 42 L21 64 L0 64 Z" fill="#eef0c8"/><path d="M0 10 L21 3.5 L21 7 L0 13.5 Z" fill="#3f4a6a"/><ellipse cx="33" cy="33" rx="11" ry="15" fill="#231b16"/><path d="M21 64 C24 52 34 44 44 36 C52 32 60 33 64 38 L64 64 Z" fill="#1c5a34"/><path d="M44 36 C52 32 60 33 64 40" stroke="#9be04a" stroke-width="1.6" fill="none"/><path d="M40 64 L43 54 C48 52 54 51 58 54 L56 64 Z" fill="#b2f26a"/><path d="M22 64 L24 57 L28 58 L26 64 Z" fill="#6fd24a"/></svg></div>
<div class="t " style="left:494.00px;top:367.29px;font-size:22px;font-weight:700;color:#1e293b;letter-spacing:0.032px;">Christopher</div>
<svg style="left:710px;top:361px" width="16" height="13" viewBox="0 0 16 13" fill="none" stroke="#3a82c4" stroke-width="1.4" stroke-linecap="round" stroke-linejoin="round"><path d="M5 1.5 H15 M5 6.5 H15 M5 11.5 H15"/><circle cx="1.3" cy="1.5" r="0.6"/><circle cx="1.3" cy="6.5" r="0.6"/><circle cx="1.3" cy="11.5" r="0.6"/></svg>
<svg style="left:710px;top:385px" width="16" height="16" viewBox="0 0 16 16" fill="none" stroke="#3a82c4" stroke-width="1.4" stroke-linecap="round" stroke-linejoin="round"><circle cx="8" cy="8" r="7"/><path d="M8 4 V8 H11"/></svg>
<svg style="left:943px;top:359px" width="17" height="16" viewBox="0 0 17 16" fill="none" stroke="#3a82c4" stroke-width="1.4" stroke-linecap="round" stroke-linejoin="round"><path d="M8.5 1 L16 14.5 H1 Z"/><path d="M8.5 6 V9.5"/><circle cx="8.5" cy="12" r="0.4"/></svg>
<svg style="left:943px;top:384px" width="16" height="18" viewBox="0 0 16 18" fill="none" stroke="#3a82c4" stroke-width="1.4" stroke-linecap="round" stroke-linejoin="round"><path d="M8 1 C10.5 2.5 13 3 15 3 V9 C15 13 11.5 15.5 8 17 C4.5 15.5 1 13 1 9 V3 C3 3 5.5 2.5 8 1 Z"/></svg>
<div class="t " style="left:733.80px;top:358.07px;font-size:16.5px;font-weight:400;color:#1e293b;letter-spacing:-0.001px;">Trips Completed:</div>
<div class="t " style="left:871.80px;top:358.07px;font-size:16.5px;font-weight:700;color:#1e293b;letter-spacing:0.000px;">2</div>
<div class="t " style="left:733.80px;top:382.67px;font-size:16.5px;font-weight:400;color:#1e293b;letter-spacing:0.028px;">Hours Driven:</div>
<div class="t " style="left:871.80px;top:382.67px;font-size:16.5px;font-weight:700;color:#1e293b;letter-spacing:-0.719px;">0.4</div>
<div class="t " style="left:966.00px;top:358.07px;font-size:16.5px;font-weight:400;color:#1e293b;letter-spacing:0.029px;">Vehicle Idling Hours:</div>
<div class="t " style="left:1132.00px;top:358.07px;font-size:16.5px;font-weight:700;color:#1e293b;letter-spacing:-0.469px;">0.0</div>
<div class="t " style="left:966.00px;top:382.67px;font-size:16.5px;font-weight:400;color:#1e293b;letter-spacing:-0.007px;">Accidents Avoided:</div>
<div class="t " style="left:1132.00px;top:382.67px;font-size:16.5px;font-weight:700;color:#1e293b;letter-spacing:0.000px;">0</div>
<div class="t " style="left:406.00px;top:435.99px;font-size:14.6px;font-weight:700;color:#3a82c4;letter-spacing:0.953px;">Driver Coaching</div>
<div class="t " style="left:569.30px;top:435.99px;font-size:14.6px;font-weight:700;color:#52657f;letter-spacing:1.159px;">Driver Info</div>
<div class="b" style="left:388px;top:469px;width:1431px;height:2px;background:#e2e8f0;"></div>
<div class="b" style="left:388px;top:468.5px;width:163px;height:3px;background:#3a82c4;"></div>
<div class="b" style="left:413px;top:492.5px;width:193.5px;height:39.0px;background:#b5d2ea;border-radius:5px;"></div>
<div class="t " style="left:431.30px;top:503.79px;font-size:14.6px;font-weight:400;color:#fff;letter-spacing:0.443px;">Share Selected Events</div>
<div class="b" style="left:614.3px;top:492.5px;width:234.20000000000005px;height:39.0px;background:#3a82c4;border-radius:5px;"></div>
<div class="t " style="left:632.80px;top:503.79px;font-size:14.6px;font-weight:400;color:#fff;letter-spacing:0.492px;">Coach All Compound Events</div>
<div class="b" style="left:856px;top:492.5px;width:357.70000000000005px;height:39.0px;background:#b5d2ea;border-radius:5px;"></div>
<div class="t " style="left:874.50px;top:503.79px;font-size:14.6px;font-weight:400;color:#fff;letter-spacing:0.510px;">Complete Coaching For Acknowledged Events</div>
<div class="b" style="left:1770px;top:492px;width:28.5px;height:28px;background:#3a82c4;border-radius:6px;"></div>
<svg style="left:0;top:0" width="1848" height="600" fill="none" stroke="#fff" stroke-width="1.5" stroke-linecap="round" stroke-linejoin="round"><path d="M1789.9 507.5 A5.9 5.9 0 1 1 1784.6 500.2"/><path d="M1783.2 497.4 L1786.4 500.2 L1783.4 503"/></svg>
<div class="b" style="left:1806px;top:463px;width:45px;height:42px;background:#3a82c4;border-radius:8px 0 0 8px;box-shadow:0 0 14px rgba(0,0,0,0.16);"></div>
<svg style="left:0;top:0" width="1848" height="600" fill="none" stroke="#fff" stroke-width="2" stroke-linejoin="round"><path d="M1827.00,471.70 L1827.51,471.80 L1828.01,472.10 L1828.46,472.57 L1828.86,473.16 L1829.20,473.82 L1829.50,474.48 L1829.76,475.10 L1830.02,475.61 L1830.29,475.99 L1830.60,476.22 L1830.97,476.28 L1831.43,476.20 L1831.98,476.02 L1832.60,475.77 L1833.28,475.50 L1833.99,475.28 L1834.69,475.15 L1835.34,475.14 L1835.90,475.28 L1836.33,475.57 L1836.62,476.00 L1836.76,476.56 L1836.75,477.21 L1836.62,477.91 L1836.40,478.62 L1836.13,479.30 L1835.88,479.92 L1835.70,480.47 L1835.62,480.93 L1835.68,481.30 L1835.91,481.61 L1836.29,481.88 L1836.80,482.14 L1837.42,482.40 L1838.08,482.70 L1838.74,483.04 L1839.33,483.44 L1839.80,483.89 L1840.10,484.39 L1840.20,484.90 L1840.10,485.41 L1839.80,485.91 L1839.33,486.36 L1838.74,486.76 L1838.08,487.10 L1837.42,487.40 L1836.80,487.66 L1836.29,487.92 L1835.91,488.19 L1835.68,488.50 L1835.62,488.87 L1835.70,489.33 L1835.88,489.88 L1836.13,490.50 L1836.40,491.18 L1836.62,491.89 L1836.75,492.59 L1836.76,493.24 L1836.62,493.80 L1836.33,494.23 L1835.90,494.52 L1835.34,494.66 L1834.69,494.65 L1833.99,494.52 L1833.28,494.30 L1832.60,494.03 L1831.98,493.78 L1831.43,493.60 L1830.97,493.52 L1830.60,493.58 L1830.29,493.81 L1830.02,494.19 L1829.76,494.70 L1829.50,495.32 L1829.20,495.98 L1828.86,496.64 L1828.46,497.23 L1828.01,497.70 L1827.51,498.00 L1827.00,498.10 L1826.49,498.00 L1825.99,497.70 L1825.54,497.23 L1825.14,496.64 L1824.80,495.98 L1824.50,495.32 L1824.24,494.70 L1823.98,494.19 L1823.71,493.81 L1823.40,493.58 L1823.03,493.52 L1822.57,493.60 L1822.02,493.78 L1821.40,494.03 L1820.72,494.30 L1820.01,494.52 L1819.31,494.65 L1818.66,494.66 L1818.10,494.52 L1817.67,494.23 L1817.38,493.80 L1817.24,493.24 L1817.25,492.59 L1817.38,491.89 L1817.60,491.18 L1817.87,490.50 L1818.12,489.88 L1818.30,489.33 L1818.38,488.87 L1818.32,488.50 L1818.09,488.19 L1817.71,487.92 L1817.20,487.66 L1816.58,487.40 L1815.92,487.10 L1815.26,486.76 L1814.67,486.36 L1814.20,485.91 L1813.90,485.41 L1813.80,484.90 L1813.90,484.39 L1814.20,483.89 L1814.67,483.44 L1815.26,483.04 L1815.92,482.70 L1816.58,482.40 L1817.20,482.14 L1817.71,481.88 L1818.09,481.61 L1818.32,481.30 L1818.38,480.93 L1818.30,480.47 L1818.12,479.92 L1817.87,479.30 L1817.60,478.62 L1817.38,477.91 L1817.25,477.21 L1817.24,476.56 L1817.38,476.00 L1817.67,475.57 L1818.10,475.28 L1818.66,475.14 L1819.31,475.15 L1820.01,475.28 L1820.72,475.50 L1821.40,475.77 L1822.02,476.02 L1822.57,476.20 L1823.03,476.28 L1823.40,476.22 L1823.71,475.99 L1823.98,475.61 L1824.24,475.10 L1824.50,474.48 L1824.80,473.82 L1825.14,473.16 L1825.54,472.57 L1825.99,472.10 L1826.49,471.80 L1827.00,471.70 Z"/><circle cx="1827" cy="484.9" r="4"/></svg>
<div class="b" style="left:413.2px;top:546.4px;width:170.3px;height:39.0px;background:#fff;border:1px solid #cfd8e3;border-radius:5px;"></div>
<div class="b" style="left:432.2px;top:559.9px;width:13.5px;height:13.5px;background:#63c98b;border:1px solid #3a3a3a;"></div>
<div class="t " style="left:449.40px;top:557.19px;font-size:14.6px;font-weight:400;color:#1e293b;letter-spacing:0.642px;">Unreviewed (14)</div>
<div class="b" style="left:600px;top:554px;width:1px;height:24px;background:#b8bec8;"></div>
<div class="b" style="left:612.1px;top:546.4px;width:171.10000000000002px;height:39.0px;background:#fff;border:1px solid #cfd8e3;border-radius:5px;"></div>
<div class="b" style="left:629.8px;top:559.9px;width:13.5px;height:13.5px;background:#f2c14e;border:1px solid #3a3a3a;"></div>
<div class="t " style="left:648.30px;top:557.19px;font-size:14.6px;font-weight:400;color:#1e293b;letter-spacing:0.488px;">Email Shared (0)</div>
<div class="b" style="left:792px;top:546.4px;width:224.5px;height:39.0px;background:#fff;border:1px solid #cfd8e3;border-radius:5px;"></div>
<div class="b" style="left:809.7px;top:559.9px;width:13.5px;height:13.5px;background:#b65fd9;border:1px solid #3a3a3a;"></div>
<div class="t " style="left:828.20px;top:557.19px;font-size:14.6px;font-weight:400;color:#1e293b;letter-spacing:0.607px;">Email Acknowledged (0)</div>
<div class="b" style="left:1032px;top:554px;width:1px;height:24px;background:#b8bec8;"></div>
<div class="b" style="left:1044.3px;top:546.4px;width:133.70000000000005px;height:39.0px;background:#fff;border:1px solid #cfd8e3;border-radius:5px;"></div>
<div class="b" style="left:1062.8px;top:559.9px;width:13.5px;height:13.5px;background:#2f98de;border:1px solid #3a3a3a;"></div>
<div class="t " style="left:1081.00px;top:557.19px;font-size:14.6px;font-weight:400;color:#1e293b;letter-spacing:0.476px;">Pending (0)</div>
<div class="b" style="left:1187px;top:546.4px;width:138.5px;height:39.0px;background:#fff;border:1px solid #cfd8e3;border-radius:5px;"></div>
<div class="b" style="left:1206px;top:559.9px;width:13.5px;height:13.5px;background:#e85a5a;border:1px solid #3a3a3a;"></div>
<div class="t " style="left:1223.50px;top:557.19px;font-size:14.6px;font-weight:400;color:#1e293b;letter-spacing:0.618px;">Overdue (0)</div>
<div class="b" style="left:1334px;top:546.4px;width:154.70000000000005px;height:39.0px;background:#fff;border:1px solid #cfd8e3;border-radius:5px;"></div>
<div class="b" style="left:1351.8px;top:559.9px;width:13.5px;height:13.5px;background:#1e9150;border:1px solid #3a3a3a;"></div>
<div class="t " style="left:1370.00px;top:557.19px;font-size:14.6px;font-weight:400;color:#1e293b;letter-spacing:0.677px;">Completed (0)</div>
<div class="b" style="left:401px;top:600px;width:1404px;height:1px;background:#dcdfe4;"></div>
<div class="b" style="left:413px;top:615.3px;width:189.39999999999998px;height:39.200000000000045px;background:#fff;border:1px solid #cfd8e3;border-radius:5px;"></div>
<div class="t " style="left:431.50px;top:626.09px;font-size:14.6px;font-weight:400;color:#1e293b;letter-spacing:0.565px;">Compound Events (2)</div>
<div class="b" style="left:619px;top:624px;width:1px;height:22px;background:#b8bec8;"></div>
<div class="t " style="left:627.00px;top:624.79px;font-size:14.6px;font-weight:700;color:#1e293b;letter-spacing:0.851px;">Top Events:</div>
<div class="b" style="left:723.3px;top:615.3px;width:187.20000000000005px;height:39.200000000000045px;background:#fff;border:1px solid #cfd8e3;border-radius:5px;"></div>
<svg style="left:735.10px;top:615.70px" width="37.60" height="37.60" viewBox="0 0 40 40" fill="none" stroke="#5e3a28" stroke-width="1.2" stroke-linecap="round" stroke-linejoin="round"><circle cx="19.8" cy="11.1" r="4.4"/><path d="M19.8 15.5 V17.6"/><path d="M11.4 31 V23.5 C11.4 20.5 13 18.8 15.5 18.3 C19 17.6 23 17.6 26 19 C27 19.6 28 20.7 28.6 22"/><path d="M13.6 19.3 L21.6 28.6 L25.5 33.3 M16.3 18.6 L22.6 26"/><path d="M14.6 26.3 V29.6"/><circle cx="28" cy="28.6" r="6.4"/><circle cx="28" cy="28.6" r="4.8"/><path d="M24 26.2 C26.5 25.2 29.5 25.2 32 26.2 M24.6 28.2 L28 33.2 L31.4 28.2"/></svg>
<div class="t " style="left:779.80px;top:624.79px;font-size:14.6px;font-weight:400;color:#1e293b;letter-spacing:0.602px;">Acceleration (9)</div>
<div class="b" style="left:919px;top:615.3px;width:158.70000000000005px;height:39.200000000000045px;background:#fff;border:1px solid #cfd8e3;border-radius:5px;"></div>
<svg style="left:931.80px;top:616.30px" width="35.20" height="35.20" viewBox="0 0 40 40" fill="none" stroke="#5e3a28" stroke-width="1.2" stroke-linecap="round" stroke-linejoin="round"><path d="M10.6 16.8 L17.6 8.9 Q18.5 8 19.4 8.9 L22 11.6 Q22.9 12.5 22 13.4 L15 21.3 Q14.1 22.2 13.2 21.3 L10.6 18.7 Q9.7 17.8 10.6 16.8 Z"/><path d="M14.2 16.5 L19 12.6"/><path d="M12.9 6.5 L15.5 9.3 M8.2 11.3 L11.2 13.9 M11.6 15.3 L17.8 9.2"/><path d="M17.5 20 L21.5 16.5 L24 21.5 L21 24 Z"/><circle cx="20.3" cy="19.6" r="1.2"/><path d="M21.8 24.8 L27.6 19.2 Q28.3 18.6 29 19.2 L34.2 24.6 Q34.8 25.3 34.2 26 L28.2 31.9 Q27.5 32.5 26.8 31.9 L21.8 26.6 Q21.2 25.9 21.8 24.8 Z"/><path d="M29.5 31 L34.5 26.2 M30.5 31.8 L35.3 27"/><path d="M34.6 27.7 L37.6 30.7 M30.2 32.5 L32.8 35.5"/><path d="M24.6 11 V13 M28.5 12.5 L27 14 M27.3 16.3 H29.6 M13 22.5 H15.6 M14.2 26.5 L15.8 25 M18 25.5 V27.5"/></svg>
<div class="t " style="left:975.00px;top:624.79px;font-size:14.6px;font-weight:400;color:#1e293b;letter-spacing:0.659px;">Seatbelt (3)</div>
<div class="b" style="left:1086px;top:615.3px;width:142.5px;height:39.200000000000045px;background:#fff;border:1px solid #cfd8e3;border-radius:5px;"></div>
<svg style="left:1099.20px;top:617.00px" width="35.20" height="35.20" viewBox="0 0 40 40" fill="none" stroke="#5e3a28" stroke-width="1.2" stroke-linecap="round" stroke-linejoin="round"><path d="M14.3 7.6 Q18 5.6 21.6 8.2 L34.7 26.3 L26 34.6 L16.6 24.8"/><path d="M21.6 8.6 L34.7 26.3"/><path d="M23.6 12 L30.2 22.6 M24.6 13.8 L26.2 12.8 M26 16.2 L27.6 15.2 M27.4 18.6 L29 17.6 M28.8 21 L30.4 20"/><path d="M16.3 24.8 V18.4 Q16.3 16.9 15.3 16.9 Q14.3 16.9 14.3 18.4 V23"/><path d="M14.3 7.6 L9.6 16.8 L12.6 21.6 C12 25 11.8 29 13 31.6 C14.5 34.6 17 35.6 19.5 35.2 C21.2 35 22.6 34.2 23.3 33.2"/><path d="M28.3 28.3 L30.4 26.2"/></svg>
<div class="t " style="left:1143.40px;top:624.79px;font-size:14.6px;font-weight:400;color:#1e293b;letter-spacing:0.441px;">Phone (2)</div>
<div class="b" style="left:1237.6px;top:615.3px;width:161.20000000000005px;height:39.200000000000045px;background:#fff;border:1px solid #cfd8e3;border-radius:5px;"></div>
<svg style="left:1251.40px;top:616.40px" width="36.00" height="36.00" viewBox="0 0 40 40" fill="none" stroke="#5e3a28" stroke-width="1.2" stroke-linecap="round" stroke-linejoin="round"><rect x="9.4" y="25.3" width="24.2" height="4.3" rx="1.6"/><path d="M18.3 25.3 V29.6 M31.8 25.6 V29.4"/><path d="M33.5 8 C32.5 9.5 34.5 11 33.6 12.6 M32 14 C31.2 15.6 33.6 16.6 33 18.2 C32.4 19.8 31.2 20.6 32 22 M31.8 23 V23.8" stroke-dasharray="1.6 0.8"/></svg>
<div class="t " style="left:1294.30px;top:624.79px;font-size:14.6px;font-weight:400;color:#1e293b;letter-spacing:0.642px;">Smoking (1)</div>
<div class="b" style="left:395px;top:669px;width:1418px;height:1px;background:#dcdfe4;"></div>
<div class="b" style="left:388px;top:684px;width:1431px;height:107px;background:#f8fafc;"></div>
<div class="b" style="left:388px;top:736px;width:1431px;height:1px;background:#e2e8f0;"></div>
<div class="b" style="left:388px;top:791px;width:1431px;height:1px;background:#e2e8f0;"></div>
<div class="t " style="left:525.20px;top:701.69px;font-size:14.6px;font-weight:700;color:#2d3a4e;letter-spacing:1.271px;">Event</div>
<div class="t " style="left:722.30px;top:691.99px;font-size:14.6px;font-weight:700;color:#2d3a4e;letter-spacing:1.271px;">Event</div>
<div class="t " style="left:722.30px;top:712.59px;font-size:14.6px;font-weight:700;color:#2d3a4e;letter-spacing:1.540px;">Time</div>
<div class="t " style="left:853.70px;top:691.99px;font-size:14.6px;font-weight:700;color:#2d3a4e;letter-spacing:1.148px;">Driver Review</div>
<div class="t " style="left:853.70px;top:712.59px;font-size:14.6px;font-weight:700;color:#2d3a4e;letter-spacing:1.319px;">Status</div>
<div class="t " style="left:1029.60px;top:691.99px;font-size:14.6px;font-weight:700;color:#2d3a4e;letter-spacing:1.254px;">Manager Review</div>
<div class="t " style="left:1029.60px;top:712.59px;font-size:14.6px;font-weight:700;color:#2d3a4e;letter-spacing:1.319px;">Status</div>
<div class="t " style="left:1206.00px;top:691.99px;font-size:14.6px;font-weight:700;color:#2d3a4e;letter-spacing:0.840px;">Coaching</div>
<div class="t " style="left:1206.00px;top:712.59px;font-size:14.6px;font-weight:700;color:#2d3a4e;letter-spacing:1.319px;">Status</div>
<div class="t " style="left:1382.00px;top:691.99px;font-size:14.6px;font-weight:700;color:#2d3a4e;letter-spacing:1.750px;">Due</div>
<div class="t " style="left:1382.00px;top:712.59px;font-size:14.6px;font-weight:700;color:#2d3a4e;letter-spacing:1.870px;">Date</div>
<div class="t " style="left:1480.60px;top:691.99px;font-size:14.6px;font-weight:700;color:#2d3a4e;letter-spacing:1.256px;">Reviewed</div>
<div class="t " style="left:1480.60px;top:712.59px;font-size:14.6px;font-weight:700;color:#2d3a4e;letter-spacing:1.133px;">By</div>
<div class="t " style="left:1656.70px;top:691.99px;font-size:14.6px;font-weight:700;color:#2d3a4e;letter-spacing:1.256px;">Reviewed</div>
<div class="t " style="left:1656.70px;top:712.59px;font-size:14.6px;font-weight:700;color:#2d3a4e;letter-spacing:1.594px;">On</div>
<div class="t " style="left:1763.78px;top:691.99px;font-size:14.6px;font-weight:700;color:#2d3a4e;letter-spacing:1.271px;">Event</div>
<div class="t " style="left:1777.78px;top:712.59px;font-size:14.6px;font-weight:700;color:#2d3a4e;letter-spacing:2.230px;">ID</div>
<div class="b" style="left:853.7px;top:742.5px;width:138.69999999999993px;height:43.5px;background:#f0f3f8;border:1px solid #cbd5e1;border-radius:5px;"></div>
<div class="t " style="left:865.20px;top:756.29px;font-size:14.6px;font-weight:400;color:#64748b;letter-spacing:0.644px;">Status</div>
<svg style="left:965.4px;top:760px" width="13" height="7" viewBox="0 0 13 7" fill="none" stroke="#334155" stroke-width="1.5" stroke-linecap="round" stroke-linejoin="round"><path d="M1 1 L6.5 6.3 L12 1"/></svg>
<div class="b" style="left:1029.6px;top:742.5px;width:139.20000000000005px;height:43.5px;background:#f0f3f8;border:1px solid #cbd5e1;border-radius:5px;"></div>
<div class="t " style="left:1041.10px;top:756.29px;font-size:14.6px;font-weight:400;color:#64748b;letter-spacing:0.644px;">Status</div>
<svg style="left:1141.8px;top:760px" width="13" height="7" viewBox="0 0 13 7" fill="none" stroke="#334155" stroke-width="1.5" stroke-linecap="round" stroke-linejoin="round"><path d="M1 1 L6.5 6.3 L12 1"/></svg>
<div class="b" style="left:1206px;top:742.5px;width:139.70000000000005px;height:43.5px;background:#f0f3f8;border:1px solid #cbd5e1;border-radius:5px;"></div>
<div class="t " style="left:1217.50px;top:756.29px;font-size:14.6px;font-weight:400;color:#64748b;letter-spacing:0.644px;">Status</div>
<svg style="left:1318.7px;top:760px" width="13" height="7" viewBox="0 0 13 7" fill="none" stroke="#334155" stroke-width="1.5" stroke-linecap="round" stroke-linejoin="round"><path d="M1 1 L6.5 6.3 L12 1"/></svg>
<div class="b" style="left:1480.6px;top:742.5px;width:139.20000000000005px;height:43.5px;background:#f0f3f8;border:1px solid #cbd5e1;border-radius:5px;"></div>
<div class="t " style="left:1492.10px;top:756.29px;font-size:14.6px;font-weight:400;color:#64748b;letter-spacing:0.269px;">Users</div>
<svg style="left:1592.8px;top:760px" width="13" height="7" viewBox="0 0 13 7" fill="none" stroke="#334155" stroke-width="1.5" stroke-linecap="round" stroke-linejoin="round"><path d="M1 1 L6.5 6.3 L12 1"/></svg>
<div class="b" style="left:388px;top:792px;width:1431px;height:459px;overflow:hidden">
<div class="b" style="left:0px;top:49.4px;width:1431px;height:1px;background:#e2e8f0;"></div>
<div class="b" style="left:11.300000000000011px;top:10.1px;width:21.5px;height:21.5px;background:#eef2f8;border:2px solid #c9d4e1;border-radius:5px;"></div>
<svg style="left:46px;top:11.40px" width="26" height="21" viewBox="0 0 26 21" fill="none" stroke="#0f1d33" stroke-width="2.1" stroke-linejoin="round"><rect x="1.5" y="1.5" width="16" height="18" rx="3"/><path d="M17.5 8 L24.5 3.5 V17.5 L17.5 13"/></svg>
<div class="b" style="left:86px;top:11.6px;width:19.5px;height:19.5px;background:#6ccb91;border-radius:2px;"></div>
<svg style="left:134px;top:3.00px" width="40" height="40" viewBox="0 0 40 40" fill="none" stroke="#5e3a28" stroke-width="1.15" stroke-linecap="round" stroke-linejoin="round"><path d="M23.2 6.2 L27 12.6 Q27.2 13 26.8 13 H19.6 Q19.2 13 19.4 12.6 Z"/><path d="M23.2 8.8 V10.4"/><path d="M15.5 19 L18.3 15.4 L20 17 L23 14.2 L25 16.4 L28.3 16.4 L28.6 19.5 L31 21.5 L28 22.8 L26 25.5 L23.5 24 L20.5 25.5 L18 23.5 L15.8 23.5 L16.6 21 Z"/><path d="M30 22 L35.5 20.2"/><circle cx="13.6" cy="32.6" r="3.3"/><circle cx="13.6" cy="32.6" r="1.7"/><circle cx="31.8" cy="32.6" r="3.3"/><circle cx="31.8" cy="32.6" r="1.7"/><path d="M17 32.2 C19 32.2 20.6 31 21 28.5 V24.8 M22.5 28 V31.6 Q22.5 32.6 23.5 32.6 H28.4"/><path d="M8.6 17.6 L14 20 M8.4 20.3 L13.4 22.6 M8.4 23.5 H13"/><ellipse cx="11.8" cy="26.6" rx="1.6" ry="1.1"/><path d="M30.4 26.4 H31.8 M34.6 24.2 V27.6 M18 27.5 V28.5"/></svg>
<svg style="left:170px;top:3.00px" width="40" height="40" viewBox="0 0 40 40" fill="none" stroke="#5e3a28" stroke-width="1.15" stroke-linecap="round" stroke-linejoin="round"><path d="M16.5 6.6 L21.6 15.4 Q21.9 16 21.2 16 H11.8 Q11.1 16 11.4 15.4 Z"/><path d="M16.5 9.6 V13.2"/><path d="M24 6.5 V35.5" stroke-dasharray="1.6 1.4" stroke-width="1.4"/><rect x="27.3" y="6.4" width="7.2" height="17" rx="3.6"/><path d="M27.6 10.6 Q31 9.6 34.2 10.6 M27.6 19.2 Q31 20.2 34.2 19.2 M26.6 12.6 H27.3 M34.5 12.6 H35.3"/><g transform="rotate(16 16.3 27)"><rect x="12.7" y="18.6" width="7.2" height="17" rx="3.6"/><path d="M13 22.6 Q16.3 21.6 19.6 22.6 M13 31.4 Q16.3 32.4 19.6 31.4"/></g></svg>
<div class="t " style="left:332.50px;top:4.79px;font-size:14.6px;font-weight:400;color:#1e293b;letter-spacing:0.741px;">2024-06-06</div>
<div class="t " style="left:332.50px;top:25.79px;font-size:14.6px;font-weight:400;color:#1e293b;letter-spacing:1.018px;">11:36:49</div>
<div class="t " style="left:464.20px;top:15.79px;font-size:14.6px;font-weight:400;color:#1e293b;letter-spacing:0.815px;">Default</div>
<div class="t " style="left:639.50px;top:15.79px;font-size:14.6px;font-weight:400;color:#1e293b;letter-spacing:0.815px;">Default</div>
<svg style="left:1395px;top:14.90px" width="14" height="16" viewBox="0 0 14 16" fill="none" stroke="#1e293b" stroke-width="1.3" stroke-linejoin="round"><path d="M4.1 3.3 Q4.1 1.3 6.1 1.3 H7.7 L11.5 5 V9.6 Q11.5 11.6 9.5 11.6 H6.1 Q4.1 11.6 4.1 9.6 Z"/><path d="M7.7 1.3 V5 H11.5"/><path d="M4.1 4.6 H3.5 Q1.5 4.6 1.5 6.6 V12.6 Q1.5 14.6 3.5 14.6 H7 Q9 14.6 9 12.6 V11.8"/></svg>
<div class="b" style="left:0px;top:99.4px;width:1431px;height:1px;background:#e2e8f0;"></div>
<div class="b" style="left:11.300000000000011px;top:60.1px;width:21.5px;height:21.5px;background:#eef2f8;border:2px solid #c9d4e1;border-radius:5px;"></div>
<svg style="left:46px;top:61.40px" width="26" height="21" viewBox="0 0 26 21" fill="none" stroke="#0f1d33" stroke-width="2.1" stroke-linejoin="round"><rect x="1.5" y="1.5" width="16" height="18" rx="3"/><path d="M17.5 8 L24.5 3.5 V17.5 L17.5 13"/></svg>
<div class="b" style="left:86px;top:61.6px;width:19.5px;height:19.5px;background:#6ccb91;border-radius:2px;"></div>
<svg style="left:134px;top:53.00px" width="40" height="40" viewBox="0 0 40 40" fill="none" stroke="#5e3a28" stroke-width="1.15" stroke-linecap="round" stroke-linejoin="round"><path d="M14.3 7.6 Q18 5.6 21.6 8.2 L34.7 26.3 L26 34.6 L16.6 24.8"/><path d="M21.6 8.6 L34.7 26.3"/><path d="M23.6 12 L30.2 22.6 M24.6 13.8 L26.2 12.8 M26 16.2 L27.6 15.2 M27.4 18.6 L29 17.6 M28.8 21 L30.4 20"/><path d="M16.3 24.8 V18.4 Q16.3 16.9 15.3 16.9 Q14.3 16.9 14.3 18.4 V23"/><path d="M14.3 7.6 L9.6 16.8 L12.6 21.6 C12 25 11.8 29 13 31.6 C14.5 34.6 17 35.6 19.5 35.2 C21.2 35 22.6 34.2 23.3 33.2"/><path d="M28.3 28.3 L30.4 26.2"/></svg>
<svg style="left:170px;top:53.00px" width="40" height="40" viewBox="0 0 40 40" fill="none" stroke="#5e3a28" stroke-width="1.15" stroke-linecap="round" stroke-linejoin="round"><path d="M10.6 16.8 L17.6 8.9 Q18.5 8 19.4 8.9 L22 11.6 Q22.9 12.5 22 13.4 L15 21.3 Q14.1 22.2 13.2 21.3 L10.6 18.7 Q9.7 17.8 10.6 16.8 Z"/><path d="M14.2 16.5 L19 12.6"/><path d="M12.9 6.5 L15.5 9.3 M8.2 11.3 L11.2 13.9 M11.6 15.3 L17.8 9.2"/><path d="M17.5 20 L21.5 16.5 L24 21.5 L21 24 Z"/><circle cx="20.3" cy="19.6" r="1.2"/><path d="M21.8 24.8 L27.6 19.2 Q28.3 18.6 29 19.2 L34.2 24.6 Q34.8 25.3 34.2 26 L28.2 31.9 Q27.5 32.5 26.8 31.9 L21.8 26.6 Q21.2 25.9 21.8 24.8 Z"/><path d="M29.5 31 L34.5 26.2 M30.5 31.8 L35.3 27"/><path d="M34.6 27.7 L37.6 30.7 M30.2 32.5 L32.8 35.5"/><path d="M24.6 11 V13 M28.5 12.5 L27 14 M27.3 16.3 H29.6 M13 22.5 H15.6 M14.2 26.5 L15.8 25 M18 25.5 V27.5"/></svg>
<div class="t " style="left:332.50px;top:54.79px;font-size:14.6px;font-weight:400;color:#1e293b;letter-spacing:0.741px;">2024-06-12</div>
<div class="t " style="left:332.50px;top:75.79px;font-size:14.6px;font-weight:400;color:#1e293b;letter-spacing:0.863px;">06:04:21</div>
<div class="t " style="left:464.20px;top:65.79px;font-size:14.6px;font-weight:400;color:#1e293b;letter-spacing:0.815px;">Default</div>
<div class="t " style="left:639.50px;top:65.79px;font-size:14.6px;font-weight:400;color:#1e293b;letter-spacing:0.815px;">Default</div>
<svg style="left:1395px;top:64.90px" width="14" height="16" viewBox="0 0 14 16" fill="none" stroke="#1e293b" stroke-width="1.3" stroke-linejoin="round"><path d="M4.1 3.3 Q4.1 1.3 6.1 1.3 H7.7 L11.5 5 V9.6 Q11.5 11.6 9.5 11.6 H6.1 Q4.1 11.6 4.1 9.6 Z"/><path d="M7.7 1.3 V5 H11.5"/><path d="M4.1 4.6 H3.5 Q1.5 4.6 1.5 6.6 V12.6 Q1.5 14.6 3.5 14.6 H7 Q9 14.6 9 12.6 V11.8"/></svg>
<div class="b" style="left:0px;top:149.4px;width:1431px;height:1px;background:#e2e8f0;"></div>
<div class="b" style="left:11.300000000000011px;top:110.1px;width:21.5px;height:21.5px;background:#eef2f8;border:2px solid #c9d4e1;border-radius:5px;"></div>
<svg style="left:46px;top:111.40px" width="26" height="21" viewBox="0 0 26 21" fill="none" stroke="#0f1d33" stroke-width="2.1" stroke-linejoin="round"><rect x="1.5" y="1.5" width="16" height="18" rx="3"/><path d="M17.5 8 L24.5 3.5 V17.5 L17.5 13"/></svg>
<div class="b" style="left:86px;top:111.6px;width:19.5px;height:19.5px;background:#6ccb91;border-radius:2px;"></div>
<svg style="left:134px;top:103.00px" width="40" height="40" viewBox="0 0 40 40" fill="none" stroke="#5e3a28" stroke-width="1.15" stroke-linecap="round" stroke-linejoin="round"><rect x="9.4" y="25.3" width="24.2" height="4.3" rx="1.6"/><path d="M18.3 25.3 V29.6 M31.8 25.6 V29.4"/><path d="M33.5 8 C32.5 9.5 34.5 11 33.6 12.6 M32 14 C31.2 15.6 33.6 16.6 33 18.2 C32.4 19.8 31.2 20.6 32 22 M31.8 23 V23.8" stroke-dasharray="1.6 0.8"/></svg>
<svg style="left:170px;top:103.00px" width="40" height="40" viewBox="0 0 40 40" fill="none" stroke="#5e3a28" stroke-width="1.15" stroke-linecap="round" stroke-linejoin="round"><circle cx="19.8" cy="11.1" r="4.4"/><path d="M19.8 15.5 V17.6"/><path d="M11.4 31 V23.5 C11.4 20.5 13 18.8 15.5 18.3 C19 17.6 23 17.6 26 19 C27 19.6 28 20.7 28.6 22"/><path d="M13.6 19.3 L21.6 28.6 L25.5 33.3 M16.3 18.6 L22.6 26"/><path d="M14.6 26.3 V29.6"/><circle cx="28" cy="28.6" r="6.4"/><circle cx="28" cy="28.6" r="4.8"/><path d="M24 26.2 C26.5 25.2 29.5 25.2 32 26.2 M24.6 28.2 L28 33.2 L31.4 28.2"/></svg>
<div class="t " style="left:332.50px;top:104.79px;font-size:14.6px;font-weight:400;color:#1e293b;letter-spacing:0.741px;">2024-06-07</div>
<div class="t " style="left:332.50px;top:125.79px;font-size:14.6px;font-weight:400;color:#1e293b;letter-spacing:0.863px;">12:42:25</div>
<div class="t " style="left:464.20px;top:115.79px;font-size:14.6px;font-weight:400;color:#1e293b;letter-spacing:0.815px;">Default</div>
<div class="t " style="left:639.50px;top:115.79px;font-size:14.6px;font-weight:400;color:#1e293b;letter-spacing:0.815px;">Default</div>
<svg style="left:1395px;top:114.90px" width="14" height="16" viewBox="0 0 14 16" fill="none" stroke="#1e293b" stroke-width="1.3" stroke-linejoin="round"><path d="M4.1 3.3 Q4.1 1.3 6.1 1.3 H7.7 L11.5 5 V9.6 Q11.5 11.6 9.5 11.6 H6.1 Q4.1 11.6 4.1 9.6 Z"/><path d="M7.7 1.3 V5 H11.5"/><path d="M4.1 4.6 H3.5 Q1.5 4.6 1.5 6.6 V12.6 Q1.5 14.6 3.5 14.6 H7 Q9 14.6 9 12.6 V11.8"/></svg>
<div class="b" style="left:0px;top:199.4px;width:1431px;height:1px;background:#e2e8f0;"></div>
<div class="b" style="left:11.300000000000011px;top:160.1px;width:21.5px;height:21.5px;background:#eef2f8;border:2px solid #c9d4e1;border-radius:5px;"></div>
<svg style="left:46px;top:161.40px" width="26" height="21" viewBox="0 0 26 21" fill="none" stroke="#0f1d33" stroke-width="2.1" stroke-linejoin="round"><rect x="1.5" y="1.5" width="16" height="18" rx="3"/><path d="M17.5 8 L24.5 3.5 V17.5 L17.5 13"/></svg>
<div class="b" style="left:86px;top:161.6px;width:19.5px;height:19.5px;background:#6ccb91;border-radius:2px;"></div>
<svg style="left:134px;top:153.00px" width="40" height="40" viewBox="0 0 40 40" fill="none" stroke="#5e3a28" stroke-width="1.15" stroke-linecap="round" stroke-linejoin="round"><path d="M10.6 16.8 L17.6 8.9 Q18.5 8 19.4 8.9 L22 11.6 Q22.9 12.5 22 13.4 L15 21.3 Q14.1 22.2 13.2 21.3 L10.6 18.7 Q9.7 17.8 10.6 16.8 Z"/><path d="M14.2 16.5 L19 12.6"/><path d="M12.9 6.5 L15.5 9.3 M8.2 11.3 L11.2 13.9 M11.6 15.3 L17.8 9.2"/><path d="M17.5 20 L21.5 16.5 L24 21.5 L21 24 Z"/><circle cx="20.3" cy="19.6" r="1.2"/><path d="M21.8 24.8 L27.6 19.2 Q28.3 18.6 29 19.2 L34.2 24.6 Q34.8 25.3 34.2 26 L28.2 31.9 Q27.5 32.5 26.8 31.9 L21.8 26.6 Q21.2 25.9 21.8 24.8 Z"/><path d="M29.5 31 L34.5 26.2 M30.5 31.8 L35.3 27"/><path d="M34.6 27.7 L37.6 30.7 M30.2 32.5 L32.8 35.5"/><path d="M24.6 11 V13 M28.5 12.5 L27 14 M27.3 16.3 H29.6 M13 22.5 H15.6 M14.2 26.5 L15.8 25 M18 25.5 V27.5"/></svg>
<div class="t " style="left:332.50px;top:154.79px;font-size:14.6px;font-weight:400;color:#1e293b;letter-spacing:0.741px;">2024-06-03</div>
<div class="t " style="left:332.50px;top:175.79px;font-size:14.6px;font-weight:400;color:#1e293b;letter-spacing:0.863px;">07:45:54</div>
<div class="t " style="left:464.20px;top:165.79px;font-size:14.6px;font-weight:400;color:#1e293b;letter-spacing:0.815px;">Default</div>
<div class="t " style="left:639.50px;top:165.79px;font-size:14.6px;font-weight:400;color:#1e293b;letter-spacing:0.815px;">Default</div>
<svg style="left:1395px;top:164.90px" width="14" height="16" viewBox="0 0 14 16" fill="none" stroke="#1e293b" stroke-width="1.3" stroke-linejoin="round"><path d="M4.1 3.3 Q4.1 1.3 6.1 1.3 H7.7 L11.5 5 V9.6 Q11.5 11.6 9.5 11.6 H6.1 Q4.1 11.6 4.1 9.6 Z"/><path d="M7.7 1.3 V5 H11.5"/><path d="M4.1 4.6 H3.5 Q1.5 4.6 1.5 6.6 V12.6 Q1.5 14.6 3.5 14.6 H7 Q9 14.6 9 12.6 V11.8"/></svg>
<div class="b" style="left:0px;top:249.4px;width:1431px;height:1px;background:#e2e8f0;"></div>
<div class="b" style="left:11.300000000000011px;top:210.1px;width:21.5px;height:21.5px;background:#eef2f8;border:2px solid #c9d4e1;border-radius:5px;"></div>
<svg style="left:46px;top:211.40px" width="26" height="21" viewBox="0 0 26 21" fill="none" stroke="#0f1d33" stroke-width="2.1" stroke-linejoin="round"><rect x="1.5" y="1.5" width="16" height="18" rx="3"/><path d="M17.5 8 L24.5 3.5 V17.5 L17.5 13"/></svg>
<div class="b" style="left:86px;top:211.6px;width:19.5px;height:19.5px;background:#6ccb91;border-radius:2px;"></div>
<svg style="left:134px;top:203.00px" width="40" height="40" viewBox="0 0 40 40" fill="none" stroke="#5e3a28" stroke-width="1.15" stroke-linecap="round" stroke-linejoin="round"><path d="M10.6 16.8 L17.6 8.9 Q18.5 8 19.4 8.9 L22 11.6 Q22.9 12.5 22 13.4 L15 21.3 Q14.1 22.2 13.2 21.3 L10.6 18.7 Q9.7 17.8 10.6 16.8 Z"/><path d="M14.2 16.5 L19 12.6"/><path d="M12.9 6.5 L15.5 9.3 M8.2 11.3 L11.2 13.9 M11.6 15.3 L17.8 9.2"/><path d="M17.5 20 L21.5 16.5 L24 21.5 L21 24 Z"/><circle cx="20.3" cy="19.6" r="1.2"/><path d="M21.8 24.8 L27.6 19.2 Q28.3 18.6 29 19.2 L34.2 24.6 Q34.8 25.3 34.2 26 L28.2 31.9 Q27.5 32.5 26.8 31.9 L21.8 26.6 Q21.2 25.9 21.8 24.8 Z"/><path d="M29.5 31 L34.5 26.2 M30.5 31.8 L35.3 27"/><path d="M34.6 27.7 L37.6 30.7 M30.2 32.5 L32.8 35.5"/><path d="M24.6 11 V13 M28.5 12.5 L27 14 M27.3 16.3 H29.6 M13 22.5 H15.6 M14.2 26.5 L15.8 25 M18 25.5 V27.5"/></svg>
<div class="t " style="left:332.50px;top:204.79px;font-size:14.6px;font-weight:400;color:#1e293b;letter-spacing:0.741px;">2024-06-04</div>
<div class="t " style="left:332.50px;top:225.79px;font-size:14.6px;font-weight:400;color:#1e293b;letter-spacing:0.863px;">10:26:20</div>
<div class="t " style="left:464.20px;top:215.79px;font-size:14.6px;font-weight:400;color:#1e293b;letter-spacing:0.815px;">Default</div>
<div class="t " style="left:639.50px;top:215.79px;font-size:14.6px;font-weight:400;color:#1e293b;letter-spacing:0.815px;">Default</div>
<svg style="left:1395px;top:214.90px" width="14" height="16" viewBox="0 0 14 16" fill="none" stroke="#1e293b" stroke-width="1.3" stroke-linejoin="round"><path d="M4.1 3.3 Q4.1 1.3 6.1 1.3 H7.7 L11.5 5 V9.6 Q11.5 11.6 9.5 11.6 H6.1 Q4.1 11.6 4.1 9.6 Z"/><path d="M7.7 1.3 V5 H11.5"/><path d="M4.1 4.6 H3.5 Q1.5 4.6 1.5 6.6 V12.6 Q1.5 14.6 3.5 14.6 H7 Q9 14.6 9 12.6 V11.8"/></svg>
<div class="b" style="left:0px;top:299.4px;width:1431px;height:1px;background:#e2e8f0;"></div>
<div class="b" style="left:11.300000000000011px;top:260.1px;width:21.5px;height:21.5px;background:#eef2f8;border:2px solid #c9d4e1;border-radius:5px;"></div>
<svg style="left:46px;top:261.40px" width="26" height="21" viewBox="0 0 26 21" fill="none" stroke="#0f1d33" stroke-width="2.1" stroke-linejoin="round"><rect x="1.5" y="1.5" width="16" height="18" rx="3"/><path d="M17.5 8 L24.5 3.5 V17.5 L17.5 13"/></svg>
<div class="b" style="left:86px;top:261.6px;width:19.5px;height:19.5px;background:#6ccb91;border-radius:2px;"></div>
<svg style="left:134px;top:253.00px" width="40" height="40" viewBox="0 0 40 40" fill="none" stroke="#5e3a28" stroke-width="1.15" stroke-linecap="round" stroke-linejoin="round"><circle cx="19.8" cy="11.1" r="4.4"/><path d="M19.8 15.5 V17.6"/><path d="M11.4 31 V23.5 C11.4 20.5 13 18.8 15.5 18.3 C19 17.6 23 17.6 26 19 C27 19.6 28 20.7 28.6 22"/><path d="M13.6 19.3 L21.6 28.6 L25.5 33.3 M16.3 18.6 L22.6 26"/><path d="M14.6 26.3 V29.6"/><circle cx="28" cy="28.6" r="6.4"/><circle cx="28" cy="28.6" r="4.8"/><path d="M24 26.2 C26.5 25.2 29.5 25.2 32 26.2 M24.6 28.2 L28 33.2 L31.4 28.2"/></svg>
<div class="t " style="left:332.50px;top:254.79px;font-size:14.6px;font-weight:400;color:#1e293b;letter-spacing:0.741px;">2024-06-04</div>
<div class="t " style="left:332.50px;top:275.79px;font-size:14.6px;font-weight:400;color:#1e293b;letter-spacing:0.863px;">10:27:04</div>
<div class="t " style="left:464.20px;top:265.79px;font-size:14.6px;font-weight:400;color:#1e293b;letter-spacing:0.815px;">Default</div>
<div class="t " style="left:639.50px;top:265.79px;font-size:14.6px;font-weight:400;color:#1e293b;letter-spacing:0.815px;">Default</div>
<svg style="left:1395px;top:264.90px" width="14" height="16" viewBox="0 0 14 16" fill="none" stroke="#1e293b" stroke-width="1.3" stroke-linejoin="round"><path d="M4.1 3.3 Q4.1 1.3 6.1 1.3 H7.7 L11.5 5 V9.6 Q11.5 11.6 9.5 11.6 H6.1 Q4.1 11.6 4.1 9.6 Z"/><path d="M7.7 1.3 V5 H11.5"/><path d="M4.1 4.6 H3.5 Q1.5 4.6 1.5 6.6 V12.6 Q1.5 14.6 3.5 14.6 H7 Q9 14.6 9 12.6 V11.8"/></svg>
<div class="b" style="left:0px;top:349.4px;width:1431px;height:1px;background:#e2e8f0;"></div>
<div class="b" style="left:11.300000000000011px;top:310.1px;width:21.5px;height:21.5px;background:#eef2f8;border:2px solid #c9d4e1;border-radius:5px;"></div>
<svg style="left:46px;top:311.40px" width="26" height="21" viewBox="0 0 26 21" fill="none" stroke="#0f1d33" stroke-width="2.1" stroke-linejoin="round"><rect x="1.5" y="1.5" width="16" height="18" rx="3"/><path d="M17.5 8 L24.5 3.5 V17.5 L17.5 13"/></svg>
<div class="b" style="left:86px;top:311.6px;width:19.5px;height:19.5px;background:#6ccb91;border-radius:2px;"></div>
<svg style="left:134px;top:303.00px" width="40" height="40" viewBox="0 0 40 40" fill="none" stroke="#5e3a28" stroke-width="1.15" stroke-linecap="round" stroke-linejoin="round"><circle cx="19.8" cy="11.1" r="4.4"/><path d="M19.8 15.5 V17.6"/><path d="M11.4 31 V23.5 C11.4 20.5 13 18.8 15.5 18.3 C19 17.6 23 17.6 26 19 C27 19.6 28 20.7 28.6 22"/><path d="M13.6 19.3 L21.6 28.6 L25.5 33.3 M16.3 18.6 L22.6 26"/><path d="M14.6 26.3 V29.6"/><circle cx="28" cy="28.6" r="6.4"/><circle cx="28" cy="28.6" r="4.8"/><path d="M24 26.2 C26.5 25.2 29.5 25.2 32 26.2 M24.6 28.2 L28 33.2 L31.4 28.2"/></svg>
<div class="t " style="left:332.50px;top:304.79px;font-size:14.6px;font-weight:400;color:#1e293b;letter-spacing:0.741px;">2024-06-06</div>
<div class="t " style="left:332.50px;top:325.79px;font-size:14.6px;font-weight:400;color:#1e293b;letter-spacing:1.018px;">11:14:31</div>
<div class="t " style="left:464.20px;top:315.79px;font-size:14.6px;font-weight:400;color:#1e293b;letter-spacing:0.815px;">Default</div>
<div class="t " style="left:639.50px;top:315.79px;font-size:14.6px;font-weight:400;color:#1e293b;letter-spacing:0.815px;">Default</div>
<svg style="left:1395px;top:314.90px" width="14" height="16" viewBox="0 0 14 16" fill="none" stroke="#1e293b" stroke-width="1.3" stroke-linejoin="round"><path d="M4.1 3.3 Q4.1 1.3 6.1 1.3 H7.7 L11.5 5 V9.6 Q11.5 11.6 9.5 11.6 H6.1 Q4.1 11.6 4.1 9.6 Z"/><path d="M7.7 1.3 V5 H11.5"/><path d="M4.1 4.6 H3.5 Q1.5 4.6 1.5 6.6 V12.6 Q1.5 14.6 3.5 14.6 H7 Q9 14.6 9 12.6 V11.8"/></svg>
<div class="b" style="left:0px;top:399.4px;width:1431px;height:1px;background:#e2e8f0;"></div>
<div class="b" style="left:11.300000000000011px;top:360.1px;width:21.5px;height:21.5px;background:#eef2f8;border:2px solid #c9d4e1;border-radius:5px;"></div>
<svg style="left:46px;top:361.40px" width="26" height="21" viewBox="0 0 26 21" fill="none" stroke="#0f1d33" stroke-width="2.1" stroke-linejoin="round"><rect x="1.5" y="1.5" width="16" height="18" rx="3"/><path d="M17.5 8 L24.5 3.5 V17.5 L17.5 13"/></svg>
<div class="b" style="left:86px;top:361.6px;width:19.5px;height:19.5px;background:#6ccb91;border-radius:2px;"></div>
<svg style="left:134px;top:353.00px" width="40" height="40" viewBox="0 0 40 40" fill="none" stroke="#5e3a28" stroke-width="1.15" stroke-linecap="round" stroke-linejoin="round"><circle cx="19.8" cy="11.1" r="4.4"/><path d="M19.8 15.5 V17.6"/><path d="M11.4 31 V23.5 C11.4 20.5 13 18.8 15.5 18.3 C19 17.6 23 17.6 26 19 C27 19.6 28 20.7 28.6 22"/><path d="M13.6 19.3 L21.6 28.6 L25.5 33.3 M16.3 18.6 L22.6 26"/><path d="M14.6 26.3 V29.6"/><circle cx="28" cy="28.6" r="6.4"/><circle cx="28" cy="28.6" r="4.8"/><path d="M24 26.2 C26.5 25.2 29.5 25.2 32 26.2 M24.6 28.2 L28 33.2 L31.4 28.2"/></svg>
<div class="t " style="left:332.50px;top:354.79px;font-size:14.6px;font-weight:400;color:#1e293b;letter-spacing:0.741px;">2024-06-06</div>
<div class="t " style="left:332.50px;top:375.79px;font-size:14.6px;font-weight:400;color:#1e293b;letter-spacing:1.018px;">11:16:53</div>
<div class="t " style="left:464.20px;top:365.79px;font-size:14.6px;font-weight:400;color:#1e293b;letter-spacing:0.815px;">Default</div>
<div class="t " style="left:639.50px;top:365.79px;font-size:14.6px;font-weight:400;color:#1e293b;letter-spacing:0.815px;">Default</div>
<svg style="left:1395px;top:364.90px" width="14" height="16" viewBox="0 0 14 16" fill="none" stroke="#1e293b" stroke-width="1.3" stroke-linejoin="round"><path d="M4.1 3.3 Q4.1 1.3 6.1 1.3 H7.7 L11.5 5 V9.6 Q11.5 11.6 9.5 11.6 H6.1 Q4.1 11.6 4.1 9.6 Z"/><path d="M7.7 1.3 V5 H11.5"/><path d="M4.1 4.6 H3.5 Q1.5 4.6 1.5 6.6 V12.6 Q1.5 14.6 3.5 14.6 H7 Q9 14.6 9 12.6 V11.8"/></svg>
<div class="b" style="left:0px;top:449.4px;width:1431px;height:1px;background:#e2e8f0;"></div>
<div class="b" style="left:11.300000000000011px;top:410.1px;width:21.5px;height:21.5px;background:#eef2f8;border:2px solid #c9d4e1;border-radius:5px;"></div>
<svg style="left:46px;top:411.40px" width="26" height="21" viewBox="0 0 26 21" fill="none" stroke="#0f1d33" stroke-width="2.1" stroke-linejoin="round"><rect x="1.5" y="1.5" width="16" height="18" rx="3"/><path d="M17.5 8 L24.5 3.5 V17.5 L17.5 13"/></svg>
<div class="b" style="left:86px;top:411.6px;width:19.5px;height:19.5px;background:#6ccb91;border-radius:2px;"></div>
<svg style="left:134px;top:403.00px" width="40" height="40" viewBox="0 0 40 40" fill="none" stroke="#5e3a28" stroke-width="1.15" stroke-linecap="round" stroke-linejoin="round"><circle cx="19.8" cy="11.1" r="4.4"/><path d="M19.8 15.5 V17.6"/><path d="M11.4 31 V23.5 C11.4 20.5 13 18.8 15.5 18.3 C19 17.6 23 17.6 26 19 C27 19.6 28 20.7 28.6 22"/><path d="M13.6 19.3 L21.6 28.6 L25.5 33.3 M16.3 18.6 L22.6 26"/><path d="M14.6 26.3 V29.6"/><circle cx="28" cy="28.6" r="6.4"/><circle cx="28" cy="28.6" r="4.8"/><path d="M24 26.2 C26.5 25.2 29.5 25.2 32 26.2 M24.6 28.2 L28 33.2 L31.4 28.2"/></svg>
<div class="t " style="left:332.50px;top:404.79px;font-size:14.6px;font-weight:400;color:#1e293b;letter-spacing:0.741px;">2024-06-06</div>
<div class="t " style="left:332.50px;top:425.79px;font-size:14.6px;font-weight:400;color:#1e293b;letter-spacing:1.018px;">11:40:04</div>
<div class="t " style="left:464.20px;top:415.79px;font-size:14.6px;font-weight:400;color:#1e293b;letter-spacing:0.815px;">Default</div>
<div class="t " style="left:639.50px;top:415.79px;font-size:14.6px;font-weight:400;color:#1e293b;letter-spacing:0.815px;">Default</div>
<svg style="left:1395px;top:414.90px" width="14" height="16" viewBox="0 0 14 16" fill="none" stroke="#1e293b" stroke-width="1.3" stroke-linejoin="round"><path d="M4.1 3.3 Q4.1 1.3 6.1 1.3 H7.7 L11.5 5 V9.6 Q11.5 11.6 9.5 11.6 H6.1 Q4.1 11.6 4.1 9.6 Z"/><path d="M7.7 1.3 V5 H11.5"/><path d="M4.1 4.6 H3.5 Q1.5 4.6 1.5 6.6 V12.6 Q1.5 14.6 3.5 14.6 H7 Q9 14.6 9 12.6 V11.8"/></svg>
<div class="b" style="left:0px;top:499.4px;width:1431px;height:1px;background:#e2e8f0;"></div>
<div class="b" style="left:11.300000000000011px;top:460.1px;width:21.5px;height:21.5px;background:#eef2f8;border:2px solid #c9d4e1;border-radius:5px;"></div>
<svg style="left:46px;top:461.40px" width="26" height="21" viewBox="0 0 26 21" fill="none" stroke="#0f1d33" stroke-width="2.1" stroke-linejoin="round"><rect x="1.5" y="1.5" width="16" height="18" rx="3"/><path d="M17.5 8 L24.5 3.5 V17.5 L17.5 13"/></svg>
<div class="b" style="left:86px;top:461.6px;width:19.5px;height:19.5px;background:#6ccb91;border-radius:2px;"></div>
<svg style="left:134px;top:453.00px" width="40" height="40" viewBox="0 0 40 40" fill="none" stroke="#5e3a28" stroke-width="1.15" stroke-linecap="round" stroke-linejoin="round"><circle cx="19.8" cy="11.1" r="4.4"/><path d="M19.8 15.5 V17.6"/><path d="M11.4 31 V23.5 C11.4 20.5 13 18.8 15.5 18.3 C19 17.6 23 17.6 26 19 C27 19.6 28 20.7 28.6 22"/><path d="M13.6 19.3 L21.6 28.6 L25.5 33.3 M16.3 18.6 L22.6 26"/><path d="M14.6 26.3 V29.6"/><circle cx="28" cy="28.6" r="6.4"/><circle cx="28" cy="28.6" r="4.8"/><path d="M24 26.2 C26.5 25.2 29.5 25.2 32 26.2 M24.6 28.2 L28 33.2 L31.4 28.2"/></svg>
<div class="t " style="left:332.50px;top:454.79px;font-size:14.6px;font-weight:400;color:#1e293b;letter-spacing:0.741px;">2024-06-10</div>
<div class="t " style="left:332.50px;top:475.79px;font-size:14.6px;font-weight:400;color:#1e293b;letter-spacing:0.863px;">09:12:44</div>
<div class="t " style="left:464.20px;top:465.79px;font-size:14.6px;font-weight:400;color:#1e293b;letter-spacing:0.815px;">Default</div>
<div class="t " style="left:639.50px;top:465.79px;font-size:14.6px;font-weight:400;color:#1e293b;letter-spacing:0.815px;">Default</div>
<svg style="left:1395px;top:464.90px" width="14" height="16" viewBox="0 0 14 16" fill="none" stroke="#1e293b" stroke-width="1.3" stroke-linejoin="round"><path d="M4.1 3.3 Q4.1 1.3 6.1 1.3 H7.7 L11.5 5 V9.6 Q11.5 11.6 9.5 11.6 H6.1 Q4.1 11.6 4.1 9.6 Z"/><path d="M7.7 1.3 V5 H11.5"/><path d="M4.1 4.6 H3.5 Q1.5 4.6 1.5 6.6 V12.6 Q1.5 14.6 3.5 14.6 H7 Q9 14.6 9 12.6 V11.8"/></svg>
</div>
<div class="t " style="left:1034.00px;top:1274.79px;font-size:14.6px;font-weight:700;color:#1e293b;letter-spacing:1.037px;">Total Reviews: 14</div>
</body></html>
